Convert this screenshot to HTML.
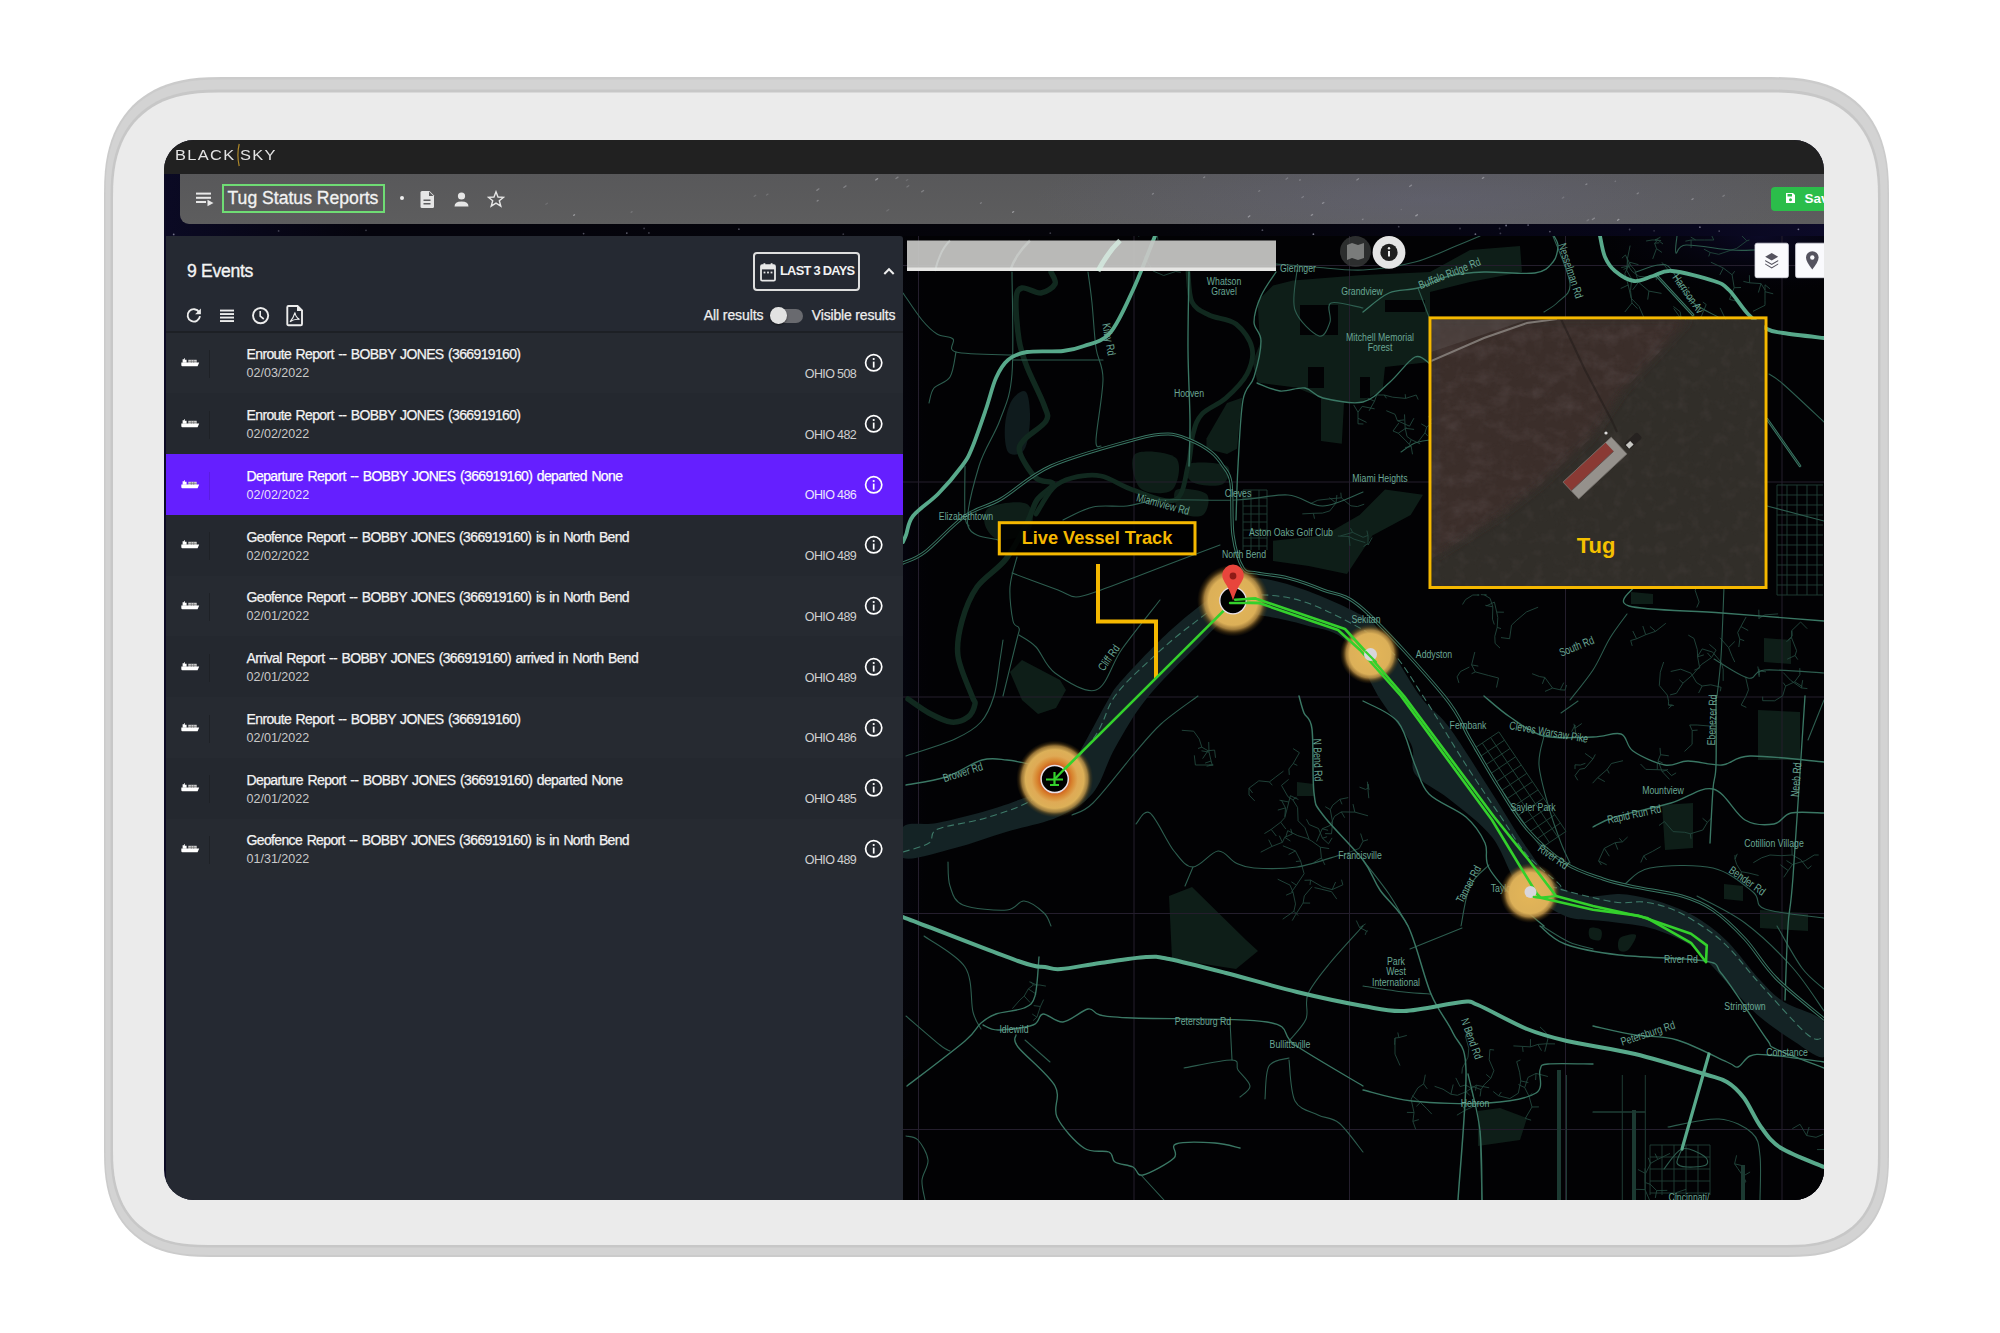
<!DOCTYPE html>
<html><head><meta charset="utf-8">
<style>
*{box-sizing:border-box;margin:0;padding:0}
html,body{width:2000px;height:1333px;overflow:hidden;background:#fff;font-family:"Liberation Sans",sans-serif}
.a{position:absolute}
.t{position:absolute;white-space:nowrap}
#tab-outer{position:absolute;left:104px;top:77px;width:1785px;height:1180px;border-radius:90px;background:#cacaca}
#tab-mid{position:absolute;left:106px;top:80px;width:1781px;height:1175px;border-radius:88px;background:#d9d9d9}
#tab-line{position:absolute;left:110.5px;top:89.5px;width:1770px;height:1158px;border-radius:82px;background:#c6c6c6}
#tab-in{position:absolute;left:113px;top:92.5px;width:1765px;height:1152.5px;border-radius:79px;background:#ebebeb}
#screen{position:absolute;left:164px;top:140px;width:1660px;height:1060px;border-radius:30px;overflow:hidden;background:linear-gradient(90deg,#0b0a24,#05040d 12%,#040409 60%,#07061a 90%,#0c0a28)}
#topbar{position:absolute;left:0;top:0;width:1660px;height:34px;background:#212121}
#toolbar{position:absolute;left:16px;top:34px;width:1644px;height:50px;background:radial-gradient(ellipse 400px 60px at 1250px 25px,rgba(110,110,150,0.25),rgba(0,0,0,0)),linear-gradient(180deg,#58585a,#5d5d5e);border-radius:0 0 0 9px}
#panel{position:absolute;left:2px;top:96px;width:737px;height:964px;background:#252932;border-radius:0 3px 0 0}
#map{position:absolute;left:739px;top:96px;width:921px;height:964px;background:#030306;overflow:hidden}
</style></head>
<body>
<svg class="a" style="left:0;top:0" width="2000" height="1333" viewBox="0 0 2000 1333"><path d="M1771.00 77.00 L1784.32 77.20 L1794.14 77.81 L1802.92 78.82 L1811.02 80.23 L1818.60 82.04 L1825.72 84.24 L1832.44 86.84 L1838.77 89.83 L1844.73 93.20 L1850.33 96.95 L1855.56 101.07 L1860.43 105.57 L1864.93 110.44 L1869.05 115.67 L1872.80 121.27 L1876.17 127.23 L1879.16 133.56 L1881.76 140.28 L1883.96 147.40 L1885.77 154.98 L1887.18 163.08 L1888.19 171.86 L1888.80 181.68 L1889.00 195.00 L1889.00 1155.52 L1888.83 1166.97 L1888.30 1175.42 L1887.44 1182.97 L1886.22 1189.94 L1884.67 1196.45 L1882.77 1202.58 L1880.54 1208.36 L1877.97 1213.80 L1875.07 1218.93 L1871.84 1223.74 L1868.30 1228.24 L1864.43 1232.43 L1860.24 1236.30 L1855.74 1239.84 L1850.93 1243.07 L1845.80 1245.97 L1840.36 1248.54 L1834.58 1250.77 L1828.45 1252.67 L1821.94 1254.22 L1814.97 1255.44 L1807.42 1256.30 L1798.97 1256.83 L1787.52 1257.00 L210.20 1257.00 L198.22 1256.82 L189.37 1256.27 L181.47 1255.36 L174.18 1254.10 L167.36 1252.47 L160.95 1250.48 L154.90 1248.14 L149.20 1245.46 L143.84 1242.42 L138.80 1239.05 L134.09 1235.33 L129.72 1231.28 L125.67 1226.91 L121.95 1222.20 L118.58 1217.16 L115.54 1211.80 L112.86 1206.10 L110.52 1200.05 L108.53 1193.64 L106.90 1186.82 L105.64 1179.53 L104.73 1171.63 L104.18 1162.78 L104.00 1150.80 L104.00 195.00 L104.20 181.68 L104.81 171.86 L105.82 163.08 L107.23 154.98 L109.04 147.40 L111.24 140.28 L113.84 133.56 L116.83 127.23 L120.20 121.27 L123.95 115.67 L128.07 110.44 L132.57 105.57 L137.44 101.07 L142.67 96.95 L148.27 93.20 L154.23 89.83 L160.56 86.84 L167.28 84.24 L174.40 82.04 L181.98 80.23 L190.08 78.82 L198.86 77.81 L208.68 77.20 L222.00 77.00Z" fill="#cbcbcb"/><path d="M1771.50 79.50 L1784.59 79.70 L1794.25 80.29 L1802.88 81.29 L1810.84 82.67 L1818.29 84.45 L1825.29 86.62 L1831.90 89.17 L1838.12 92.11 L1843.99 95.42 L1849.49 99.11 L1854.63 103.17 L1859.41 107.59 L1863.83 112.37 L1867.89 117.51 L1871.58 123.01 L1874.89 128.88 L1877.83 135.10 L1880.38 141.71 L1882.55 148.71 L1884.33 156.16 L1885.71 164.12 L1886.71 172.75 L1887.30 182.41 L1887.50 195.50 L1887.50 1155.24 L1887.33 1166.50 L1886.82 1174.81 L1885.96 1182.23 L1884.77 1189.07 L1883.24 1195.48 L1881.38 1201.50 L1879.18 1207.18 L1876.66 1212.54 L1873.81 1217.58 L1870.64 1222.31 L1867.15 1226.73 L1863.34 1230.84 L1859.23 1234.65 L1854.81 1238.14 L1850.08 1241.31 L1845.04 1244.16 L1839.68 1246.68 L1834.00 1248.88 L1827.98 1250.74 L1821.57 1252.27 L1814.73 1253.46 L1807.31 1254.32 L1799.00 1254.83 L1787.74 1255.00 L209.90 1255.00 L198.12 1254.82 L189.42 1254.28 L181.66 1253.39 L174.49 1252.14 L167.79 1250.54 L161.49 1248.59 L155.54 1246.29 L149.94 1243.65 L144.66 1240.67 L139.71 1237.35 L135.08 1233.70 L130.78 1229.72 L126.80 1225.42 L123.15 1220.79 L119.83 1215.84 L116.85 1210.56 L114.21 1204.96 L111.91 1199.01 L109.96 1192.71 L108.36 1186.01 L107.11 1178.84 L106.22 1171.08 L105.68 1162.38 L105.50 1150.60 L105.50 195.50 L105.70 182.41 L106.29 172.75 L107.29 164.12 L108.67 156.16 L110.45 148.71 L112.62 141.71 L115.17 135.10 L118.11 128.88 L121.42 123.01 L125.11 117.51 L129.17 112.37 L133.59 107.59 L138.37 103.17 L143.51 99.11 L149.01 95.42 L154.88 92.11 L161.10 89.17 L167.71 86.62 L174.71 84.45 L182.16 82.67 L190.12 81.29 L198.75 80.29 L208.41 79.70 L221.50 79.50Z" fill="#d3d3d3"/><path d="M1771.50 89.50 L1783.80 89.69 L1792.88 90.25 L1800.99 91.18 L1808.47 92.48 L1815.46 94.15 L1822.05 96.19 L1828.25 98.59 L1834.10 101.35 L1839.61 104.46 L1844.78 107.93 L1849.61 111.74 L1854.11 115.89 L1858.26 120.39 L1862.07 125.22 L1865.54 130.39 L1868.65 135.90 L1871.41 141.75 L1873.81 147.95 L1875.85 154.54 L1877.52 161.53 L1878.82 169.01 L1879.75 177.12 L1880.31 186.20 L1880.50 198.50 L1880.50 1153.76 L1880.34 1164.34 L1879.86 1172.15 L1879.06 1179.12 L1877.94 1185.55 L1876.50 1191.57 L1874.75 1197.23 L1872.68 1202.57 L1870.31 1207.60 L1867.63 1212.34 L1864.65 1216.78 L1861.37 1220.94 L1857.80 1224.80 L1853.94 1228.37 L1849.78 1231.65 L1845.34 1234.63 L1840.60 1237.31 L1835.57 1239.68 L1830.23 1241.75 L1824.57 1243.50 L1818.55 1244.94 L1812.12 1246.06 L1805.15 1246.86 L1797.34 1247.34 L1786.76 1247.50 L208.60 1247.50 L197.53 1247.33 L189.36 1246.83 L182.06 1245.99 L175.33 1244.82 L169.03 1243.31 L163.11 1241.48 L157.52 1239.32 L152.26 1236.84 L147.30 1234.03 L142.65 1230.92 L138.30 1227.49 L134.25 1223.75 L130.51 1219.70 L127.08 1215.35 L123.97 1210.70 L121.16 1205.74 L118.68 1200.48 L116.52 1194.89 L114.69 1188.97 L113.18 1182.67 L112.01 1175.94 L111.17 1168.64 L110.67 1160.47 L110.50 1149.40 L110.50 198.50 L110.69 186.20 L111.25 177.12 L112.18 169.01 L113.48 161.53 L115.15 154.54 L117.19 147.95 L119.59 141.75 L122.35 135.90 L125.46 130.39 L128.93 125.22 L132.74 120.39 L136.89 115.89 L141.39 111.74 L146.22 107.93 L151.39 104.46 L156.90 101.35 L162.75 98.59 L168.95 96.19 L175.54 94.15 L182.53 92.48 L190.01 91.18 L198.12 90.25 L207.20 89.69 L219.50 89.50Z" fill="#c7c7c7"/><path d="M1772.00 92.50 L1783.96 92.68 L1792.79 93.23 L1800.67 94.13 L1807.95 95.40 L1814.75 97.02 L1821.16 99.01 L1827.19 101.34 L1832.88 104.02 L1838.24 107.05 L1843.26 110.42 L1847.96 114.13 L1852.33 118.17 L1856.37 122.54 L1860.08 127.24 L1863.45 132.26 L1866.48 137.62 L1869.16 143.31 L1871.49 149.34 L1873.48 155.75 L1875.10 162.55 L1876.37 169.83 L1877.27 177.71 L1877.82 186.54 L1878.00 198.50 L1878.00 1153.84 L1877.84 1164.13 L1877.38 1171.72 L1876.60 1178.50 L1875.51 1184.76 L1874.11 1190.61 L1872.41 1196.11 L1870.40 1201.30 L1868.09 1206.20 L1865.49 1210.80 L1862.59 1215.13 L1859.40 1219.17 L1855.93 1222.93 L1852.17 1226.40 L1848.13 1229.59 L1843.80 1232.49 L1839.20 1235.09 L1834.30 1237.40 L1829.11 1239.41 L1823.61 1241.11 L1817.76 1242.51 L1811.50 1243.60 L1804.72 1244.38 L1797.13 1244.84 L1786.84 1245.00 L208.40 1245.00 L197.63 1244.84 L189.69 1244.35 L182.59 1243.53 L176.04 1242.39 L169.92 1240.93 L164.16 1239.14 L158.73 1237.04 L153.61 1234.63 L148.79 1231.90 L144.26 1228.87 L140.03 1225.54 L136.10 1221.90 L132.46 1217.97 L129.13 1213.74 L126.10 1209.21 L123.37 1204.39 L120.96 1199.27 L118.86 1193.84 L117.07 1188.08 L115.61 1181.96 L114.47 1175.41 L113.65 1168.31 L113.16 1160.37 L113.00 1149.60 L113.00 198.50 L113.18 186.54 L113.73 177.71 L114.63 169.83 L115.90 162.55 L117.52 155.75 L119.51 149.34 L121.84 143.31 L124.52 137.62 L127.55 132.26 L130.92 127.24 L134.63 122.54 L138.67 118.17 L143.04 114.13 L147.74 110.42 L152.76 107.05 L158.12 104.02 L163.81 101.34 L169.84 99.01 L176.25 97.02 L183.05 95.40 L190.33 94.13 L198.21 93.23 L207.04 92.68 L219.00 92.50Z" fill="#ebebeb"/></svg>
<div id="screen">
<div id="topbar"></div>
<div id="toolbar"></div>
<div id="panel"></div>
<div id="map"><svg class="a" style="left:0;top:0" width="921" height="964" viewBox="903 236 921 964">
<defs>
<radialGradient id="spaceL" cx="0" cy="0.5" r="1"><stop offset="0" stop-color="#0d0b2e" stop-opacity="0.9"/><stop offset="1" stop-color="#000" stop-opacity="0"/></radialGradient>
<radialGradient id="spaceTR" cx="0.5" cy="0.5" r="0.5"><stop offset="0" stop-color="#0c0a2a" stop-opacity="0.9"/><stop offset="1" stop-color="#000" stop-opacity="0"/></radialGradient>
<radialGradient id="glowY" cx="0.5" cy="0.5" r="0.5"><stop offset="0" stop-color="#e4b658"/><stop offset="0.68" stop-color="#dcb058"/><stop offset="0.8" stop-color="#c89a48" stop-opacity="0.8"/><stop offset="0.9" stop-color="#8a6420" stop-opacity="0.35"/><stop offset="1" stop-color="#5a4010" stop-opacity="0"/></radialGradient>
<radialGradient id="glowO" cx="0.5" cy="0.5" r="0.5"><stop offset="0" stop-color="#c8401a"/><stop offset="0.34" stop-color="#cc581e"/><stop offset="0.46" stop-color="#d8842e"/><stop offset="0.6" stop-color="#dfaa55"/><stop offset="0.76" stop-color="#dcb058"/><stop offset="0.86" stop-color="#c89a48" stop-opacity="0.75"/><stop offset="0.93" stop-color="#8a6420" stop-opacity="0.3"/><stop offset="1" stop-color="#5a4010" stop-opacity="0"/></radialGradient>
<radialGradient id="land" cx="0.3" cy="0.3" r="0.9"><stop offset="0" stop-color="#403533"/><stop offset="1" stop-color="#3a302d"/></radialGradient>
<filter id="noise2" x="0" y="0" width="100%" height="100%"><feTurbulence type="fractalNoise" baseFrequency="0.045 0.07" numOctaves="4" seed="11"/><feColorMatrix type="matrix" values="0 0 0 0 0.11  0 0 0 0 0.08  0 0 0 0 0.08  0 0 0 -2.2 1.2"/></filter>
<filter id="blur1"><feGaussianBlur stdDeviation="6"/></filter>
<filter id="blur2" x="-10%" y="-10%" width="120%" height="120%"><feGaussianBlur stdDeviation="4"/></filter>
<filter id="noise" x="0" y="0" width="100%" height="100%"><feTurbulence type="fractalNoise" baseFrequency="0.09" numOctaves="3" seed="4"/><feColorMatrix type="matrix" values="0 0 0 0 0.13  0 0 0 0 0.10  0 0 0 0 0.10  0 0 0 -1.5 0.8"/></filter>
</defs>
<rect x="903" y="236" width="921" height="964" fill="#020204"/>
<ellipse cx="903" cy="640" rx="40" ry="420" fill="url(#spaceL)"/><ellipse cx="1760" cy="236" rx="200" ry="70" fill="url(#spaceTR)"/>
<path d="M1257.6 300.8 L1273.0 285.5 L1293.0 280.4 L1359.6 275.3 L1430.0 272.0 L1470.0 250.0 L1520.0 246.0 L1522.0 272.0 L1470.0 282.0 L1430.0 292.0 L1430.0 362.0 L1385.0 367.0 L1382.6 390.0 L1359.6 403.0 L1344.0 403.0 L1341.8 443.7 L1321.0 441.0 L1321.0 397.8 L1296.0 387.6 L1257.6 382.5 L1252.5 362.0 L1260.0 344.0Z" fill="#0e1e18"/>
<path d="M1206.5 438.6 L1227.0 403.0 L1242.0 397.8 L1237.0 448.8 L1227.0 454.0 L1206.5 448.8Z" fill="#0e1e18"/>
<path d="M1135.0 454.0 C1141.0 449.0 1169.8 452.0 1176.0 458.0 C1182.2 464.0 1178.0 485.0 1172.0 490.0 C1166.0 495.0 1146.2 494.0 1140.0 488.0 C1133.8 482.0 1129.0 459.0 1135.0 454.0Z" fill="#0e1e18"/>
<path d="M1188.7 464.0 C1194.5 461.3 1221.5 462.6 1227.0 466.0 C1232.5 469.4 1227.8 481.8 1222.0 484.5 C1216.2 487.2 1197.5 485.4 1192.0 482.0 C1186.5 478.6 1182.9 466.7 1188.7 464.0Z" fill="#0e1e18"/>
<path d="M1176.0 490.0 C1180.4 487.0 1202.0 489.8 1206.5 494.0 C1211.0 498.2 1207.4 512.0 1203.0 515.0 C1198.6 518.0 1184.5 516.2 1180.0 512.0 C1175.5 507.8 1171.6 493.0 1176.0 490.0Z" fill="#0e1e18"/>
<path d="M1273.0 540.7 L1324.0 535.6 L1359.6 515.0 L1385.0 489.6 L1423.0 494.8 L1410.7 515.0 L1372.4 535.6 L1347.0 573.9 L1308.6 566.0 L1273.0 561.0Z" fill="#0e1e18"/>
<path d="M1169.0 896.0 L1192.0 887.0 L1246.0 940.0 L1258.0 951.0 L1236.0 969.0 L1172.0 959.0Z" fill="#0e1e18"/>
<path d="M1478.0 1111.0 L1500.0 1108.0 L1527.0 1118.0 L1520.0 1140.0 L1478.0 1146.0Z" fill="#0e1e18"/>
<path d="M1758.0 710.0 L1800.0 712.0 L1800.0 760.0 L1758.0 760.0Z" fill="#0e1e18"/>
<path d="M1662.0 805.0 L1693.0 803.0 L1693.0 848.0 L1665.0 850.0Z" fill="#0e1e18"/>
<path d="M1764.0 638.0 L1791.0 640.0 L1791.0 664.0 L1764.0 662.0Z" fill="#0e1e18"/>
<path d="M1631.0 592.0 L1653.0 594.0 L1653.0 604.0 L1631.0 604.0Z" fill="#0e1e18"/>
<path d="M1297.0 782.0 L1314.0 784.0 L1314.0 796.0 L1297.0 796.0Z" fill="#0e1e18"/>
<path d="M1010.0 672.0 L1022.0 660.0 L1060.0 680.0 L1066.0 690.0 L1056.0 708.0 L1038.0 714.0 L1022.0 700.0Z" fill="#0e1e18"/>
<path d="M990.0 507.0 C997.0 503.5 1020.3 500.2 1027.0 504.0 C1033.7 507.8 1034.5 524.0 1030.0 530.0 C1025.5 536.0 1007.5 540.8 1000.0 540.0 C992.5 539.2 986.7 530.5 985.0 525.0 C983.3 519.5 983.0 510.5 990.0 507.0Z" fill="#0e1e18"/>
<path d="M1416.0 735.0 C1419.7 730.8 1437.3 739.2 1450.0 750.0 C1462.7 760.8 1488.7 791.7 1492.0 800.0 C1495.3 808.3 1480.7 804.2 1470.0 800.0 C1459.3 795.8 1437.0 785.8 1428.0 775.0 C1419.0 764.2 1412.3 739.2 1416.0 735.0Z" fill="#0e1e18"/>
<path d="M1724.0 884.0 L1743.0 886.0 L1743.0 901.0 L1724.0 899.0Z" fill="#0e1e18"/>
<path d="M1760.0 910.0 L1808.0 913.0 L1808.0 931.0 L1760.0 928.0Z" fill="#0e1e18"/>
<path d="M1590.0 928.0 C1591.8 926.7 1599.3 928.0 1601.0 930.0 C1602.7 932.0 1601.8 938.7 1600.0 940.0 C1598.2 941.3 1591.7 940.0 1590.0 938.0 C1588.3 936.0 1588.2 929.3 1590.0 928.0Z" fill="#0e1e18"/>
<path d="M1620.0 938.0 C1622.8 935.5 1634.7 933.0 1636.0 935.0 C1637.3 937.0 1630.8 947.5 1628.0 950.0 C1625.2 952.5 1620.3 952.0 1619.0 950.0 C1617.7 948.0 1617.2 940.5 1620.0 938.0Z" fill="#0e1e18"/>
<rect x="1308" y="367" width="16" height="21" fill="#020204"/>
<rect x="1360" y="377" width="10" height="21" fill="#020204"/>
<rect x="1300" y="305" width="38" height="30" fill="#020204"/>
<rect x="1385" y="300" width="40" height="12" fill="#020204"/>
<path d="M1012.0 400.0 C1015.5 394.5 1023.0 388.7 1026.0 392.0 C1029.0 395.3 1030.3 410.3 1030.0 420.0 C1029.7 429.7 1027.7 444.7 1024.0 450.0 C1020.3 455.3 1011.2 456.2 1008.0 452.0 C1004.8 447.8 1004.3 433.7 1005.0 425.0 C1005.7 416.3 1008.5 405.5 1012.0 400.0Z" fill="#0f1b1d"/>
<line x1="918.5" y1="236" x2="918.5" y2="1200" stroke="#241e2d" stroke-width="1"/>
<line x1="1134" y1="236" x2="1134" y2="1200" stroke="#241e2d" stroke-width="1"/>
<line x1="1349.5" y1="236" x2="1349.5" y2="1200" stroke="#241e2d" stroke-width="1"/>
<line x1="1565.5" y1="236" x2="1565.5" y2="1200" stroke="#241e2d" stroke-width="1"/>
<line x1="1782" y1="236" x2="1782" y2="1200" stroke="#241e2d" stroke-width="1"/>
<line x1="903" y1="265.5" x2="1824" y2="265.5" stroke="#241e2d" stroke-width="1"/>
<line x1="903" y1="482" x2="1824" y2="482" stroke="#241e2d" stroke-width="1"/>
<line x1="903" y1="697" x2="1824" y2="697" stroke="#241e2d" stroke-width="1"/>
<line x1="903" y1="913.5" x2="1824" y2="913.5" stroke="#241e2d" stroke-width="1"/>
<line x1="903" y1="1129.5" x2="1824" y2="1129.5" stroke="#241e2d" stroke-width="1"/>
<path d="M1051.0 272.0 C1051.7 274.0 1056.7 280.5 1055.0 284.0 C1053.3 287.5 1046.5 292.3 1041.0 293.0 C1035.5 293.7 1026.2 286.8 1022.0 288.0 C1017.8 289.2 1016.5 291.3 1016.0 300.0 C1015.5 308.7 1017.2 328.8 1019.0 340.0 C1020.8 351.2 1022.8 356.2 1027.0 367.0 C1031.2 377.8 1040.8 396.0 1044.0 405.0 C1047.2 414.0 1049.3 415.2 1046.0 421.0 C1042.7 426.8 1028.3 434.7 1024.0 440.0 C1019.7 445.3 1018.0 446.7 1020.0 453.0 C1022.0 459.3 1030.5 472.8 1036.0 478.0 C1041.5 483.2 1052.8 480.3 1053.0 484.0 C1053.2 487.7 1041.3 493.5 1037.0 500.0 C1032.7 506.5 1032.2 513.2 1027.0 523.0 C1021.8 532.8 1014.3 548.3 1006.0 559.0 C997.7 569.7 984.3 576.7 977.0 587.0 C969.7 597.3 965.2 609.5 962.0 621.0 C958.8 632.5 956.3 643.5 958.0 656.0 C959.7 668.5 969.2 688.0 972.0 696.0 C974.8 704.0 975.7 700.5 975.0 704.0 C974.3 707.5 972.0 714.0 968.0 717.0 C964.0 720.0 957.5 722.7 951.0 722.0 C944.5 721.3 936.2 716.8 929.0 713.0 C921.8 709.2 911.5 701.3 908.0 699.0" fill="none" stroke="#11291f" stroke-width="5.5" stroke-linecap="round"/>
<path d="M1188.0 272.0 C1188.7 277.0 1188.5 294.8 1192.0 302.0 C1195.5 309.2 1201.7 311.3 1209.0 315.0 C1216.3 318.7 1228.8 318.5 1236.0 324.0 C1243.2 329.5 1250.2 339.7 1252.0 348.0 C1253.8 356.3 1251.3 365.7 1247.0 374.0 C1242.7 382.3 1233.5 391.3 1226.0 398.0 C1218.5 404.7 1207.5 408.0 1202.0 414.0 C1196.5 420.0 1195.3 425.3 1193.0 434.0 C1190.7 442.7 1191.0 455.0 1188.0 466.0 C1185.0 477.0 1184.2 496.0 1175.0 500.0 C1165.8 504.0 1145.3 494.0 1133.0 490.0 C1120.7 486.0 1111.2 478.0 1101.0 476.0 C1090.8 474.0 1080.0 476.0 1072.0 478.0 C1064.0 480.0 1059.0 482.0 1053.0 488.0 C1047.0 494.0 1038.8 509.7 1036.0 514.0" fill="none" stroke="#11291f" stroke-width="4.8" stroke-linecap="round"/>
<path d="M903.0 827.0 C908.7 821.2 922.7 825.8 937.0 823.0 C951.3 820.2 974.5 814.2 989.0 810.0 C1003.5 805.8 1012.5 802.0 1024.0 798.0 C1035.5 794.0 1048.0 795.0 1058.0 786.0 C1068.0 777.0 1075.7 758.3 1084.0 744.0 C1092.3 729.7 1101.5 710.8 1108.0 700.0 C1114.5 689.2 1112.3 690.8 1123.0 679.0 C1133.7 667.2 1155.5 643.8 1172.0 629.0 C1188.5 614.2 1208.3 598.5 1222.0 590.0 C1235.7 581.5 1240.2 578.0 1254.0 578.0 C1267.8 578.0 1286.8 583.7 1305.0 590.0 C1323.2 596.3 1350.5 609.0 1363.0 616.0 C1375.5 623.0 1370.5 618.7 1380.0 632.0 C1389.5 645.3 1408.5 680.2 1420.0 696.0 C1431.5 711.8 1437.0 710.8 1449.0 727.0 C1461.0 743.2 1479.0 772.8 1492.0 793.0 C1505.0 813.2 1516.3 832.8 1527.0 848.0 C1537.7 863.2 1546.0 876.0 1556.0 884.0 C1566.0 892.0 1576.5 894.3 1587.0 896.0 C1597.5 897.7 1608.5 893.5 1619.0 894.0 C1629.5 894.5 1639.5 896.3 1650.0 899.0 C1660.5 901.7 1672.8 906.0 1682.0 910.0 C1691.2 914.0 1697.2 917.5 1705.0 923.0 C1712.8 928.5 1719.8 933.5 1729.0 943.0 C1738.2 952.5 1750.8 970.2 1760.0 980.0 C1769.2 989.8 1773.3 995.0 1784.0 1002.0 C1794.7 1009.0 1817.3 1012.8 1824.0 1022.0 C1830.7 1031.2 1829.3 1054.0 1824.0 1057.0 C1818.7 1060.0 1802.7 1046.7 1792.0 1040.0 C1781.3 1033.3 1769.2 1024.7 1760.0 1017.0 C1750.8 1009.3 1744.8 1002.3 1737.0 994.0 C1729.2 985.7 1720.8 975.2 1713.0 967.0 C1705.2 958.8 1700.5 951.5 1690.0 945.0 C1679.5 938.5 1664.5 932.0 1650.0 928.0 C1635.5 924.0 1616.2 922.7 1603.0 921.0 C1589.8 919.3 1580.7 920.7 1571.0 918.0 C1561.3 915.3 1553.8 910.3 1545.0 905.0 C1536.2 899.7 1526.8 897.3 1518.0 886.0 C1509.2 874.7 1503.5 851.5 1492.0 837.0 C1480.5 822.5 1461.8 809.5 1449.0 799.0 C1436.2 788.5 1421.3 783.2 1415.0 774.0 C1408.7 764.8 1416.8 756.5 1411.0 744.0 C1405.2 731.5 1390.8 716.2 1380.0 699.0 C1369.2 681.8 1358.5 653.3 1346.0 641.0 C1333.5 628.7 1318.7 629.2 1305.0 625.0 C1291.3 620.8 1276.0 617.8 1264.0 616.0 C1252.0 614.2 1244.2 609.0 1233.0 614.0 C1221.8 619.0 1211.3 632.0 1197.0 646.0 C1182.7 660.0 1160.7 681.0 1147.0 698.0 C1133.3 715.0 1124.0 732.2 1115.0 748.0 C1106.0 763.8 1102.5 781.5 1093.0 793.0 C1083.5 804.5 1072.5 810.5 1058.0 817.0 C1043.5 823.5 1023.2 826.8 1006.0 832.0 C988.8 837.2 972.2 843.7 955.0 848.0 C937.8 852.3 911.7 861.5 903.0 858.0 C894.3 854.5 897.3 832.8 903.0 827.0Z" fill="#142325"/>
<path d="M903.0 852.0 C907.3 850.5 923.2 846.8 929.0 843.0 C934.8 839.2 928.0 833.3 938.0 829.0 C948.0 824.7 971.8 822.8 989.0 817.0 C1006.2 811.2 1023.7 807.0 1041.0 794.0 C1058.3 781.0 1080.7 755.3 1093.0 739.0 C1105.3 722.7 1105.5 709.2 1115.0 696.0 C1124.5 682.8 1137.5 671.7 1150.0 660.0 C1162.5 648.3 1176.0 636.3 1190.0 626.0 C1204.0 615.7 1217.3 602.7 1234.0 598.0 C1250.7 593.3 1271.5 594.3 1290.0 598.0 C1308.5 601.7 1328.3 611.3 1345.0 620.0 C1361.7 628.7 1377.0 637.3 1390.0 650.0 C1403.0 662.7 1410.3 676.8 1423.0 696.0 C1435.7 715.2 1453.0 744.8 1466.0 765.0 C1479.0 785.2 1490.8 802.0 1501.0 817.0 C1511.2 832.0 1517.2 843.7 1527.0 855.0 C1536.8 866.3 1555.2 879.5 1560.0 885.0 C1564.8 890.5 1547.0 885.2 1556.0 888.0 C1565.0 890.8 1599.3 899.7 1614.0 902.0 C1628.7 904.3 1634.0 900.7 1644.0 902.0 C1654.0 903.3 1663.8 905.7 1674.0 910.0 C1684.2 914.3 1695.8 921.7 1705.0 928.0 C1714.2 934.3 1719.8 938.7 1729.0 948.0 C1738.2 957.3 1746.8 969.5 1760.0 984.0 C1773.2 998.5 1797.3 1026.2 1808.0 1035.0 C1818.7 1043.8 1821.3 1036.7 1824.0 1037.0" fill="none" stroke="#3e7a69" stroke-width="1.1" stroke-dasharray="7 4"/>
<g transform="translate(1520 790) rotate(-34)"><line x1="-15.0" y1="-60.0" x2="-15.0" y2="60.0" stroke="#1f4036" stroke-width="0.9"/><line x1="-5.0" y1="-60.0" x2="-5.0" y2="60.0" stroke="#1f4036" stroke-width="0.9"/><line x1="5.0" y1="-60.0" x2="5.0" y2="60.0" stroke="#1f4036" stroke-width="0.9"/><line x1="15.0" y1="-60.0" x2="15.0" y2="60.0" stroke="#1f4036" stroke-width="0.9"/><line x1="-15.0" y1="-60.0" x2="15.0" y2="-60.0" stroke="#1f4036" stroke-width="0.9"/><line x1="-15.0" y1="-50.0" x2="15.0" y2="-50.0" stroke="#1f4036" stroke-width="0.9"/><line x1="-15.0" y1="-40.0" x2="15.0" y2="-40.0" stroke="#1f4036" stroke-width="0.9"/><line x1="-15.0" y1="-30.0" x2="15.0" y2="-30.0" stroke="#1f4036" stroke-width="0.9"/><line x1="-15.0" y1="-20.0" x2="15.0" y2="-20.0" stroke="#1f4036" stroke-width="0.9"/><line x1="-15.0" y1="-10.0" x2="15.0" y2="-10.0" stroke="#1f4036" stroke-width="0.9"/><line x1="-15.0" y1="0.0" x2="15.0" y2="0.0" stroke="#1f4036" stroke-width="0.9"/><line x1="-15.0" y1="10.0" x2="15.0" y2="10.0" stroke="#1f4036" stroke-width="0.9"/><line x1="-15.0" y1="20.0" x2="15.0" y2="20.0" stroke="#1f4036" stroke-width="0.9"/><line x1="-15.0" y1="30.0" x2="15.0" y2="30.0" stroke="#1f4036" stroke-width="0.9"/><line x1="-15.0" y1="40.0" x2="15.0" y2="40.0" stroke="#1f4036" stroke-width="0.9"/><line x1="-15.0" y1="50.0" x2="15.0" y2="50.0" stroke="#1f4036" stroke-width="0.9"/><line x1="-15.0" y1="60.0" x2="15.0" y2="60.0" stroke="#1f4036" stroke-width="0.9"/></g>
<g transform="translate(1800 540) rotate(0)"><line x1="-23.0" y1="-55.0" x2="-23.0" y2="55.0" stroke="#1f4036" stroke-width="0.9"/><line x1="-13.0" y1="-55.0" x2="-13.0" y2="55.0" stroke="#1f4036" stroke-width="0.9"/><line x1="-3.0" y1="-55.0" x2="-3.0" y2="55.0" stroke="#1f4036" stroke-width="0.9"/><line x1="7.0" y1="-55.0" x2="7.0" y2="55.0" stroke="#1f4036" stroke-width="0.9"/><line x1="17.0" y1="-55.0" x2="17.0" y2="55.0" stroke="#1f4036" stroke-width="0.9"/><line x1="-23.0" y1="-55.0" x2="23.0" y2="-55.0" stroke="#1f4036" stroke-width="0.9"/><line x1="-23.0" y1="-45.0" x2="23.0" y2="-45.0" stroke="#1f4036" stroke-width="0.9"/><line x1="-23.0" y1="-35.0" x2="23.0" y2="-35.0" stroke="#1f4036" stroke-width="0.9"/><line x1="-23.0" y1="-25.0" x2="23.0" y2="-25.0" stroke="#1f4036" stroke-width="0.9"/><line x1="-23.0" y1="-15.0" x2="23.0" y2="-15.0" stroke="#1f4036" stroke-width="0.9"/><line x1="-23.0" y1="-5.0" x2="23.0" y2="-5.0" stroke="#1f4036" stroke-width="0.9"/><line x1="-23.0" y1="5.0" x2="23.0" y2="5.0" stroke="#1f4036" stroke-width="0.9"/><line x1="-23.0" y1="15.0" x2="23.0" y2="15.0" stroke="#1f4036" stroke-width="0.9"/><line x1="-23.0" y1="25.0" x2="23.0" y2="25.0" stroke="#1f4036" stroke-width="0.9"/><line x1="-23.0" y1="35.0" x2="23.0" y2="35.0" stroke="#1f4036" stroke-width="0.9"/><line x1="-23.0" y1="45.0" x2="23.0" y2="45.0" stroke="#1f4036" stroke-width="0.9"/><line x1="-23.0" y1="55.0" x2="23.0" y2="55.0" stroke="#1f4036" stroke-width="0.9"/></g>
<g transform="translate(1088 380) rotate(0)"><line x1="-0.1" y1="-0.05" x2="-0.1" y2="0.05" stroke="#1f4036" stroke-width="0.9"/><line x1="-0.05" y1="-0.1" x2="0.05" y2="-0.1" stroke="#1f4036" stroke-width="0.9"/></g>
<g transform="translate(1255 520) rotate(0)"><line x1="-12.0" y1="-30.0" x2="-12.0" y2="30.0" stroke="#1f4036" stroke-width="0.9"/><line x1="-4.0" y1="-30.0" x2="-4.0" y2="30.0" stroke="#1f4036" stroke-width="0.9"/><line x1="4.0" y1="-30.0" x2="4.0" y2="30.0" stroke="#1f4036" stroke-width="0.9"/><line x1="12.0" y1="-30.0" x2="12.0" y2="30.0" stroke="#1f4036" stroke-width="0.9"/><line x1="-12.0" y1="-30.0" x2="12.0" y2="-30.0" stroke="#1f4036" stroke-width="0.9"/><line x1="-12.0" y1="-22.0" x2="12.0" y2="-22.0" stroke="#1f4036" stroke-width="0.9"/><line x1="-12.0" y1="-14.0" x2="12.0" y2="-14.0" stroke="#1f4036" stroke-width="0.9"/><line x1="-12.0" y1="-6.0" x2="12.0" y2="-6.0" stroke="#1f4036" stroke-width="0.9"/><line x1="-12.0" y1="2.0" x2="12.0" y2="2.0" stroke="#1f4036" stroke-width="0.9"/><line x1="-12.0" y1="10.0" x2="12.0" y2="10.0" stroke="#1f4036" stroke-width="0.9"/><line x1="-12.0" y1="18.0" x2="12.0" y2="18.0" stroke="#1f4036" stroke-width="0.9"/><line x1="-12.0" y1="26.0" x2="12.0" y2="26.0" stroke="#1f4036" stroke-width="0.9"/></g>
<g transform="translate(1088 1010) rotate(0)"><line x1="-0.1" y1="-0.05" x2="-0.1" y2="0.05" stroke="#1f4036" stroke-width="0.9"/><line x1="-0.05" y1="-0.1" x2="0.05" y2="-0.1" stroke="#1f4036" stroke-width="0.9"/></g>
<g transform="translate(1680 1170) rotate(0)"><line x1="-30.0" y1="-25.0" x2="-30.0" y2="25.0" stroke="#1f4036" stroke-width="0.9"/><line x1="-18.0" y1="-25.0" x2="-18.0" y2="25.0" stroke="#1f4036" stroke-width="0.9"/><line x1="-6.0" y1="-25.0" x2="-6.0" y2="25.0" stroke="#1f4036" stroke-width="0.9"/><line x1="6.0" y1="-25.0" x2="6.0" y2="25.0" stroke="#1f4036" stroke-width="0.9"/><line x1="18.0" y1="-25.0" x2="18.0" y2="25.0" stroke="#1f4036" stroke-width="0.9"/><line x1="30.0" y1="-25.0" x2="30.0" y2="25.0" stroke="#1f4036" stroke-width="0.9"/><line x1="-30.0" y1="-25.0" x2="30.0" y2="-25.0" stroke="#1f4036" stroke-width="0.9"/><line x1="-30.0" y1="-13.0" x2="30.0" y2="-13.0" stroke="#1f4036" stroke-width="0.9"/><line x1="-30.0" y1="-1.0" x2="30.0" y2="-1.0" stroke="#1f4036" stroke-width="0.9"/><line x1="-30.0" y1="11.0" x2="30.0" y2="11.0" stroke="#1f4036" stroke-width="0.9"/><line x1="-30.0" y1="23.0" x2="30.0" y2="23.0" stroke="#1f4036" stroke-width="0.9"/></g>
<line x1="1293.2" y1="763.5" x2="1297.3" y2="765.4" stroke="#23473d" stroke-width="0.9"/>
<line x1="1299.4" y1="752.7" x2="1293.1" y2="748.6" stroke="#23473d" stroke-width="0.9"/>
<path d="M1289.3 774.9 L1288.9 769.0 L1293.2 763.5 L1299.4 752.7" fill="none" stroke="#23473d" stroke-width="0.9" stroke-linejoin="round"/>
<line x1="1272.0" y1="846.4" x2="1268.7" y2="839.7" stroke="#23473d" stroke-width="0.9"/>
<line x1="1282.4" y1="842.3" x2="1279.3" y2="835.7" stroke="#23473d" stroke-width="0.9"/>
<line x1="1284.7" y1="837.3" x2="1290.4" y2="841.0" stroke="#23473d" stroke-width="0.9"/>
<line x1="1292.3" y1="834.0" x2="1290.7" y2="828.8" stroke="#23473d" stroke-width="0.9"/>
<path d="M1260.7 852.2 L1272.0 846.4 L1282.4 842.3 L1284.7 837.3 L1292.3 834.0" fill="none" stroke="#23473d" stroke-width="0.9" stroke-linejoin="round"/>
<line x1="1322.2" y1="828.8" x2="1328.1" y2="830.3" stroke="#23473d" stroke-width="0.9"/>
<line x1="1341.3" y1="811.9" x2="1344.7" y2="817.7" stroke="#23473d" stroke-width="0.9"/>
<line x1="1354.8" y1="812.1" x2="1353.0" y2="804.1" stroke="#23473d" stroke-width="0.9"/>
<path d="M1316.6 841.5 L1322.2 828.8 L1330.3 825.4 L1334.5 816.3 L1341.3 811.9 L1354.8 812.1 L1368.0 815.8" fill="none" stroke="#23473d" stroke-width="0.9" stroke-linejoin="round"/>
<line x1="1288.8" y1="802.0" x2="1279.5" y2="800.2" stroke="#23473d" stroke-width="0.9"/>
<line x1="1290.4" y1="795.7" x2="1298.4" y2="799.5" stroke="#23473d" stroke-width="0.9"/>
<path d="M1285.0 816.7 L1287.1 808.7 L1288.8 802.0 L1290.4 795.7" fill="none" stroke="#23473d" stroke-width="0.9" stroke-linejoin="round"/>
<line x1="1339.9" y1="799.3" x2="1342.0" y2="804.3" stroke="#23473d" stroke-width="0.9"/>
<line x1="1330.3" y1="809.7" x2="1325.3" y2="806.7" stroke="#23473d" stroke-width="0.9"/>
<line x1="1331.5" y1="833.8" x2="1325.1" y2="833.6" stroke="#23473d" stroke-width="0.9"/>
<path d="M1348.2 797.6 L1339.9 799.3 L1332.7 805.2 L1330.3 809.7 L1332.6 822.2 L1331.5 833.8" fill="none" stroke="#23473d" stroke-width="0.9" stroke-linejoin="round"/>
<line x1="1322.5" y1="838.3" x2="1327.1" y2="836.7" stroke="#23473d" stroke-width="0.9"/>
<line x1="1328.5" y1="843.8" x2="1332.1" y2="837.9" stroke="#23473d" stroke-width="0.9"/>
<path d="M1306.5 819.3 L1309.2 824.6 L1318.5 828.5 L1322.5 838.3 L1328.5 843.8" fill="none" stroke="#23473d" stroke-width="0.9" stroke-linejoin="round"/>
<line x1="1363.0" y1="841.2" x2="1368.0" y2="839.7" stroke="#23473d" stroke-width="0.9"/>
<line x1="1348.1" y1="852.7" x2="1349.6" y2="858.1" stroke="#23473d" stroke-width="0.9"/>
<path d="M1360.6 833.5 L1363.0 841.2 L1359.2 848.5 L1348.1 852.7 L1342.8 856.4" fill="none" stroke="#23473d" stroke-width="0.9" stroke-linejoin="round"/>
<line x1="1303.1" y1="903.0" x2="1310.1" y2="903.1" stroke="#23473d" stroke-width="0.9"/>
<path d="M1312.1 886.7 L1304.3 895.9 L1303.1 903.0 L1295.6 914.7 L1292.2 920.6" fill="none" stroke="#23473d" stroke-width="0.9" stroke-linejoin="round"/>
<line x1="1296.4" y1="885.2" x2="1291.4" y2="881.8" stroke="#23473d" stroke-width="0.9"/>
<line x1="1300.6" y1="861.0" x2="1295.9" y2="861.5" stroke="#23473d" stroke-width="0.9"/>
<line x1="1295.4" y1="850.9" x2="1288.6" y2="854.6" stroke="#23473d" stroke-width="0.9"/>
<path d="M1291.5 891.9 L1296.4 885.2 L1304.1 873.7 L1300.6 861.0 L1295.4 850.9 L1282.9 845.8" fill="none" stroke="#23473d" stroke-width="0.9" stroke-linejoin="round"/>
<line x1="1310.6" y1="880.1" x2="1310.0" y2="884.9" stroke="#23473d" stroke-width="0.9"/>
<line x1="1332.2" y1="889.6" x2="1335.6" y2="882.0" stroke="#23473d" stroke-width="0.9"/>
<line x1="1342.8" y1="884.8" x2="1341.5" y2="879.7" stroke="#23473d" stroke-width="0.9"/>
<path d="M1304.5 880.3 L1310.6 880.1 L1322.6 887.0 L1332.2 889.6 L1342.8 884.8" fill="none" stroke="#23473d" stroke-width="0.9" stroke-linejoin="round"/>
<line x1="1285.5" y1="807.9" x2="1277.8" y2="810.1" stroke="#23473d" stroke-width="0.9"/>
<line x1="1280.7" y1="822.2" x2="1285.9" y2="829.1" stroke="#23473d" stroke-width="0.9"/>
<line x1="1271.2" y1="829.4" x2="1276.3" y2="836.0" stroke="#23473d" stroke-width="0.9"/>
<path d="M1281.4 800.1 L1285.5 807.9 L1284.8 817.6 L1280.7 822.2 L1271.2 829.4 L1264.4 833.6" fill="none" stroke="#23473d" stroke-width="0.9" stroke-linejoin="round"/>
<path d="M1314.5 887.6 L1321.8 889.3 L1331.6 891.7 L1336.8 899.1" fill="none" stroke="#23473d" stroke-width="0.9" stroke-linejoin="round"/>
<line x1="1292.8" y1="799.8" x2="1296.5" y2="797.3" stroke="#23473d" stroke-width="0.9"/>
<line x1="1281.5" y1="785.4" x2="1288.6" y2="779.4" stroke="#23473d" stroke-width="0.9"/>
<path d="M1309.1 839.2 L1304.9 827.6 L1298.1 820.8 L1297.6 807.5 L1292.8 799.8 L1288.0 796.8 L1281.5 785.4" fill="none" stroke="#23473d" stroke-width="0.9" stroke-linejoin="round"/>
<line x1="1368.0" y1="785.8" x2="1367.3" y2="781.7" stroke="#23473d" stroke-width="0.9"/>
<line x1="1368.0" y1="784.2" x2="1369.0" y2="789.9" stroke="#23473d" stroke-width="0.9"/>
<line x1="1368.0" y1="789.6" x2="1368.8" y2="798.2" stroke="#23473d" stroke-width="0.9"/>
<path d="M1359.5 787.1 L1365.5 789.4 L1368.0 788.2 L1368.0 785.8 L1368.0 784.2 L1368.0 787.7 L1368.0 789.6" fill="none" stroke="#23473d" stroke-width="0.9" stroke-linejoin="round"/>
<line x1="1269.4" y1="781.9" x2="1272.3" y2="785.3" stroke="#23473d" stroke-width="0.9"/>
<line x1="1249.0" y1="788.2" x2="1252.6" y2="793.0" stroke="#23473d" stroke-width="0.9"/>
<line x1="1249.0" y1="795.0" x2="1254.7" y2="800.9" stroke="#23473d" stroke-width="0.9"/>
<path d="M1283.5 771.1 L1275.7 777.0 L1269.4 781.9 L1258.8 780.8 L1249.0 788.2 L1249.0 795.0" fill="none" stroke="#23473d" stroke-width="0.9" stroke-linejoin="round"/>
<line x1="1359.6" y1="927.6" x2="1365.6" y2="923.9" stroke="#23473d" stroke-width="0.9"/>
<line x1="1366.5" y1="931.0" x2="1365.2" y2="934.9" stroke="#23473d" stroke-width="0.9"/>
<path d="M1356.3 920.5 L1359.6 927.6 L1366.5 931.0 L1368.0 931.0 L1368.0 931.0" fill="none" stroke="#23473d" stroke-width="0.9" stroke-linejoin="round"/>
<line x1="1321.4" y1="857.9" x2="1313.7" y2="862.6" stroke="#23473d" stroke-width="0.9"/>
<line x1="1320.3" y1="847.2" x2="1329.2" y2="848.6" stroke="#23473d" stroke-width="0.9"/>
<line x1="1287.7" y1="830.6" x2="1285.8" y2="837.0" stroke="#23473d" stroke-width="0.9"/>
<path d="M1324.9 864.9 L1321.4 857.9 L1320.3 847.2 L1311.7 841.0 L1306.9 838.4 L1297.7 835.6 L1287.7 830.6" fill="none" stroke="#23473d" stroke-width="0.9" stroke-linejoin="round"/>
<line x1="1293.9" y1="911.3" x2="1298.1" y2="915.5" stroke="#23473d" stroke-width="0.9"/>
<line x1="1293.0" y1="892.2" x2="1286.1" y2="895.2" stroke="#23473d" stroke-width="0.9"/>
<path d="M1282.7 919.2 L1293.9 911.3 L1295.5 903.9 L1293.0 892.2 L1290.0 885.1 L1277.7 879.2" fill="none" stroke="#23473d" stroke-width="0.9" stroke-linejoin="round"/>
<line x1="1632.0" y1="303.0" x2="1637.5" y2="308.6" stroke="#23473d" stroke-width="0.9"/>
<path d="M1624.8 312.0 L1632.0 303.0 L1630.5 290.6 L1631.7 279.0 L1626.8 270.6 L1627.5 258.4 L1630.1 245.6" fill="none" stroke="#23473d" stroke-width="0.9" stroke-linejoin="round"/>
<line x1="1723.3" y1="268.0" x2="1719.8" y2="274.9" stroke="#23473d" stroke-width="0.9"/>
<line x1="1732.1" y1="274.8" x2="1734.7" y2="271.2" stroke="#23473d" stroke-width="0.9"/>
<line x1="1734.2" y1="287.7" x2="1741.0" y2="287.5" stroke="#23473d" stroke-width="0.9"/>
<line x1="1729.5" y1="299.4" x2="1737.2" y2="301.3" stroke="#23473d" stroke-width="0.9"/>
<path d="M1710.9 262.2 L1723.3 268.0 L1732.1 274.8 L1734.2 287.7 L1729.5 299.4" fill="none" stroke="#23473d" stroke-width="0.9" stroke-linejoin="round"/>
<line x1="1686.0" y1="318.3" x2="1684.7" y2="322.9" stroke="#23473d" stroke-width="0.9"/>
<line x1="1701.3" y1="316.5" x2="1704.7" y2="322.4" stroke="#23473d" stroke-width="0.9"/>
<line x1="1706.2" y1="304.5" x2="1702.8" y2="302.1" stroke="#23473d" stroke-width="0.9"/>
<path d="M1673.7 308.4 L1679.8 317.0 L1686.0 318.3 L1695.2 320.0 L1701.3 316.5 L1706.2 304.5" fill="none" stroke="#23473d" stroke-width="0.9" stroke-linejoin="round"/>
<line x1="1681.0" y1="317.3" x2="1676.2" y2="316.9" stroke="#23473d" stroke-width="0.9"/>
<line x1="1668.9" y1="325.0" x2="1664.6" y2="320.3" stroke="#23473d" stroke-width="0.9"/>
<line x1="1661.0" y1="325.0" x2="1662.1" y2="328.9" stroke="#23473d" stroke-width="0.9"/>
<path d="M1673.4 306.5 L1680.1 311.7 L1681.0 317.3 L1677.3 325.0 L1672.4 325.0 L1668.9 325.0 L1661.0 325.0" fill="none" stroke="#23473d" stroke-width="0.9" stroke-linejoin="round"/>
<line x1="1725.8" y1="319.8" x2="1720.8" y2="323.7" stroke="#23473d" stroke-width="0.9"/>
<line x1="1717.0" y1="325.0" x2="1720.9" y2="329.2" stroke="#23473d" stroke-width="0.9"/>
<line x1="1709.8" y1="325.0" x2="1707.8" y2="319.1" stroke="#23473d" stroke-width="0.9"/>
<path d="M1720.1 307.9 L1725.8 319.8 L1724.6 325.0 L1717.0 325.0 L1709.8 325.0" fill="none" stroke="#23473d" stroke-width="0.9" stroke-linejoin="round"/>
<line x1="1765.0" y1="291.7" x2="1773.2" y2="293.8" stroke="#23473d" stroke-width="0.9"/>
<line x1="1765.0" y1="284.8" x2="1769.9" y2="288.8" stroke="#23473d" stroke-width="0.9"/>
<path d="M1753.0 311.3 L1765.0 305.3 L1765.0 304.9 L1765.0 303.0 L1765.0 300.2 L1765.0 291.7 L1765.0 284.8" fill="none" stroke="#23473d" stroke-width="0.9" stroke-linejoin="round"/>
<line x1="1628.4" y1="266.1" x2="1621.2" y2="267.6" stroke="#23473d" stroke-width="0.9"/>
<line x1="1655.7" y1="275.8" x2="1656.5" y2="280.1" stroke="#23473d" stroke-width="0.9"/>
<line x1="1667.9" y1="269.5" x2="1661.9" y2="262.3" stroke="#23473d" stroke-width="0.9"/>
<path d="M1626.8 257.1 L1628.4 266.1 L1632.2 271.4 L1638.9 276.3 L1644.1 276.9 L1655.7 275.8 L1667.9 269.5" fill="none" stroke="#23473d" stroke-width="0.9" stroke-linejoin="round"/>
<line x1="1648.9" y1="291.1" x2="1647.7" y2="299.6" stroke="#23473d" stroke-width="0.9"/>
<line x1="1638.5" y1="282.2" x2="1632.7" y2="289.8" stroke="#23473d" stroke-width="0.9"/>
<line x1="1630.9" y1="265.6" x2="1623.5" y2="269.5" stroke="#23473d" stroke-width="0.9"/>
<line x1="1625.4" y1="255.0" x2="1621.9" y2="258.2" stroke="#23473d" stroke-width="0.9"/>
<path d="M1661.5 293.4 L1648.9 291.1 L1638.5 282.2 L1634.8 270.0 L1630.9 265.6 L1625.4 255.0" fill="none" stroke="#23473d" stroke-width="0.9" stroke-linejoin="round"/>
<line x1="1691.1" y1="240.0" x2="1685.4" y2="241.2" stroke="#23473d" stroke-width="0.9"/>
<line x1="1695.8" y1="240.0" x2="1690.8" y2="237.1" stroke="#23473d" stroke-width="0.9"/>
<line x1="1713.8" y1="240.0" x2="1711.0" y2="234.1" stroke="#23473d" stroke-width="0.9"/>
<path d="M1691.1 247.8 L1691.1 240.0 L1695.8 240.0 L1704.7 240.0 L1713.8 240.0" fill="none" stroke="#23473d" stroke-width="0.9" stroke-linejoin="round"/>
<line x1="1710.2" y1="252.5" x2="1708.7" y2="256.4" stroke="#23473d" stroke-width="0.9"/>
<line x1="1746.8" y1="240.9" x2="1740.3" y2="234.2" stroke="#23473d" stroke-width="0.9"/>
<path d="M1703.9 249.1 L1710.2 252.5 L1718.8 254.3 L1730.3 250.4 L1736.8 248.3 L1746.8 240.9 L1749.4 240.0" fill="none" stroke="#23473d" stroke-width="0.9" stroke-linejoin="round"/>
<line x1="1749.6" y1="282.8" x2="1749.4" y2="275.2" stroke="#23473d" stroke-width="0.9"/>
<line x1="1761.0" y1="283.6" x2="1758.4" y2="292.5" stroke="#23473d" stroke-width="0.9"/>
<path d="M1743.4 281.4 L1749.6 282.8 L1761.0 283.6 L1765.0 290.0" fill="none" stroke="#23473d" stroke-width="0.9" stroke-linejoin="round"/>
<line x1="1656.5" y1="248.6" x2="1661.9" y2="252.4" stroke="#23473d" stroke-width="0.9"/>
<line x1="1654.6" y1="243.2" x2="1659.3" y2="242.8" stroke="#23473d" stroke-width="0.9"/>
<line x1="1657.8" y1="240.0" x2="1663.0" y2="244.0" stroke="#23473d" stroke-width="0.9"/>
<line x1="1655.0" y1="240.0" x2="1660.5" y2="237.2" stroke="#23473d" stroke-width="0.9"/>
<line x1="1656.9" y1="240.0" x2="1661.1" y2="240.6" stroke="#23473d" stroke-width="0.9"/>
<line x1="1652.0" y1="240.0" x2="1646.1" y2="241.0" stroke="#23473d" stroke-width="0.9"/>
<path d="M1652.7 258.9 L1656.5 248.6 L1654.6 243.2 L1657.8 240.0 L1655.0 240.0 L1656.9 240.0 L1652.0 240.0" fill="none" stroke="#23473d" stroke-width="0.9" stroke-linejoin="round"/>
<line x1="1628.2" y1="285.0" x2="1620.7" y2="288.5" stroke="#23473d" stroke-width="0.9"/>
<line x1="1630.0" y1="262.3" x2="1638.5" y2="264.7" stroke="#23473d" stroke-width="0.9"/>
<path d="M1643.6 316.8 L1639.1 306.5 L1631.2 298.2 L1628.2 285.0 L1624.8 273.5 L1630.0 262.3" fill="none" stroke="#23473d" stroke-width="0.9" stroke-linejoin="round"/>
<line x1="1411.2" y1="446.5" x2="1405.0" y2="447.5" stroke="#23473d" stroke-width="0.9"/>
<line x1="1398.3" y1="433.2" x2="1406.6" y2="427.7" stroke="#23473d" stroke-width="0.9"/>
<line x1="1393.0" y1="431.0" x2="1398.8" y2="423.1" stroke="#23473d" stroke-width="0.9"/>
<path d="M1412.5 454.3 L1411.2 446.5 L1405.3 440.2 L1398.3 433.2 L1393.0 431.0" fill="none" stroke="#23473d" stroke-width="0.9" stroke-linejoin="round"/>
<line x1="1358.0" y1="412.2" x2="1353.7" y2="404.9" stroke="#23473d" stroke-width="0.9"/>
<line x1="1358.0" y1="418.2" x2="1366.5" y2="422.4" stroke="#23473d" stroke-width="0.9"/>
<line x1="1358.0" y1="423.8" x2="1363.4" y2="424.0" stroke="#23473d" stroke-width="0.9"/>
<path d="M1374.6 408.8 L1362.2 406.4 L1358.0 412.2 L1358.0 418.2 L1358.0 423.8" fill="none" stroke="#23473d" stroke-width="0.9" stroke-linejoin="round"/>
<line x1="1425.0" y1="432.8" x2="1427.7" y2="436.0" stroke="#23473d" stroke-width="0.9"/>
<line x1="1426.7" y1="427.0" x2="1421.3" y2="423.9" stroke="#23473d" stroke-width="0.9"/>
<line x1="1434.0" y1="421.6" x2="1428.3" y2="416.6" stroke="#23473d" stroke-width="0.9"/>
<path d="M1417.2 443.1 L1425.0 432.8 L1426.7 427.0 L1434.0 421.6" fill="none" stroke="#23473d" stroke-width="0.9" stroke-linejoin="round"/>
<line x1="1405.2" y1="428.3" x2="1414.1" y2="429.4" stroke="#23473d" stroke-width="0.9"/>
<line x1="1411.2" y1="439.6" x2="1409.5" y2="443.9" stroke="#23473d" stroke-width="0.9"/>
<path d="M1404.5 414.4 L1405.2 428.3 L1407.0 436.5 L1411.2 439.6 L1420.2 443.9" fill="none" stroke="#23473d" stroke-width="0.9" stroke-linejoin="round"/>
<line x1="1374.5" y1="401.2" x2="1367.7" y2="398.2" stroke="#23473d" stroke-width="0.9"/>
<line x1="1384.2" y1="395.0" x2="1386.5" y2="398.3" stroke="#23473d" stroke-width="0.9"/>
<line x1="1405.6" y1="398.4" x2="1405.2" y2="394.2" stroke="#23473d" stroke-width="0.9"/>
<line x1="1416.2" y1="395.0" x2="1418.2" y2="399.6" stroke="#23473d" stroke-width="0.9"/>
<path d="M1369.1 410.8 L1374.5 401.2 L1376.7 395.0 L1384.2 395.0 L1392.7 397.2 L1405.6 398.4 L1416.2 395.0" fill="none" stroke="#23473d" stroke-width="0.9" stroke-linejoin="round"/>
<line x1="1397.4" y1="420.7" x2="1404.2" y2="419.9" stroke="#23473d" stroke-width="0.9"/>
<line x1="1409.5" y1="426.2" x2="1413.9" y2="418.2" stroke="#23473d" stroke-width="0.9"/>
<path d="M1386.3 410.7 L1395.0 414.3 L1397.4 420.7 L1409.5 426.2" fill="none" stroke="#23473d" stroke-width="0.9" stroke-linejoin="round"/>
<line x1="1498.6" y1="1095.8" x2="1501.3" y2="1092.0" stroke="#23473d" stroke-width="0.9"/>
<line x1="1520.8" y1="1080.9" x2="1528.4" y2="1082.6" stroke="#23473d" stroke-width="0.9"/>
<line x1="1516.7" y1="1061.6" x2="1520.4" y2="1060.0" stroke="#23473d" stroke-width="0.9"/>
<path d="M1493.2 1091.5 L1498.6 1095.8 L1509.8 1098.6 L1518.3 1093.2 L1520.8 1080.9 L1519.6 1072.2 L1516.7 1061.6" fill="none" stroke="#23473d" stroke-width="0.9" stroke-linejoin="round"/>
<line x1="1536.0" y1="1073.4" x2="1535.6" y2="1080.0" stroke="#23473d" stroke-width="0.9"/>
<line x1="1524.7" y1="1087.6" x2="1518.4" y2="1084.5" stroke="#23473d" stroke-width="0.9"/>
<line x1="1529.0" y1="1096.2" x2="1532.3" y2="1093.3" stroke="#23473d" stroke-width="0.9"/>
<line x1="1532.0" y1="1107.0" x2="1538.9" y2="1106.9" stroke="#23473d" stroke-width="0.9"/>
<line x1="1525.3" y1="1118.4" x2="1531.1" y2="1120.2" stroke="#23473d" stroke-width="0.9"/>
<path d="M1547.9 1076.5 L1536.0 1073.4 L1528.0 1077.4 L1524.7 1087.6 L1529.0 1096.2 L1532.0 1107.0 L1525.3 1118.4" fill="none" stroke="#23473d" stroke-width="0.9" stroke-linejoin="round"/>
<line x1="1522.5" y1="1046.4" x2="1523.1" y2="1051.9" stroke="#23473d" stroke-width="0.9"/>
<line x1="1530.4" y1="1046.9" x2="1530.5" y2="1039.1" stroke="#23473d" stroke-width="0.9"/>
<line x1="1537.9" y1="1044.4" x2="1541.5" y2="1050.7" stroke="#23473d" stroke-width="0.9"/>
<path d="M1513.4 1045.9 L1522.5 1046.4 L1530.4 1046.9 L1537.9 1044.4 L1546.1 1043.8 L1555.0 1043.9" fill="none" stroke="#23473d" stroke-width="0.9" stroke-linejoin="round"/>
<line x1="1412.9" y1="1121.4" x2="1418.8" y2="1119.6" stroke="#23473d" stroke-width="0.9"/>
<line x1="1414.0" y1="1112.5" x2="1406.9" y2="1112.4" stroke="#23473d" stroke-width="0.9"/>
<line x1="1423.6" y1="1083.9" x2="1427.3" y2="1088.9" stroke="#23473d" stroke-width="0.9"/>
<path d="M1415.7 1129.3 L1412.9 1121.4 L1414.0 1112.5 L1411.1 1099.1 L1417.8 1087.9 L1423.6 1083.9 L1425.3 1074.7" fill="none" stroke="#23473d" stroke-width="0.9" stroke-linejoin="round"/>
<line x1="1398.9" y1="1037.6" x2="1397.8" y2="1032.5" stroke="#23473d" stroke-width="0.9"/>
<line x1="1395.0" y1="1038.0" x2="1394.6" y2="1044.7" stroke="#23473d" stroke-width="0.9"/>
<path d="M1406.8 1035.4 L1398.9 1037.6 L1395.0 1038.0 L1395.0 1042.6 L1395.0 1054.1 L1400.0 1065.5" fill="none" stroke="#23473d" stroke-width="0.9" stroke-linejoin="round"/>
<line x1="1476.3" y1="1085.2" x2="1475.5" y2="1090.6" stroke="#23473d" stroke-width="0.9"/>
<line x1="1466.2" y1="1091.7" x2="1469.8" y2="1095.5" stroke="#23473d" stroke-width="0.9"/>
<line x1="1450.9" y1="1094.2" x2="1453.2" y2="1084.5" stroke="#23473d" stroke-width="0.9"/>
<path d="M1489.2 1087.8 L1476.3 1085.2 L1466.2 1091.7 L1457.4 1095.3 L1450.9 1094.2 L1443.0 1089.2 L1434.6 1086.3" fill="none" stroke="#23473d" stroke-width="0.9" stroke-linejoin="round"/>
<line x1="1420.4" y1="1102.4" x2="1416.4" y2="1106.3" stroke="#23473d" stroke-width="0.9"/>
<path d="M1412.1 1095.6 L1420.4 1102.4 L1426.8 1108.7 L1431.8 1114.1" fill="none" stroke="#23473d" stroke-width="0.9" stroke-linejoin="round"/>
<path d="M1544.8 1051.7 L1547.9 1038.9 L1546.1 1032.8 L1540.0 1026.9" fill="none" stroke="#23473d" stroke-width="0.9" stroke-linejoin="round"/>
<line x1="1465.3" y1="1110.2" x2="1460.8" y2="1103.1" stroke="#23473d" stroke-width="0.9"/>
<line x1="1472.4" y1="1107.0" x2="1470.5" y2="1102.3" stroke="#23473d" stroke-width="0.9"/>
<line x1="1460.1" y1="1086.6" x2="1455.8" y2="1077.9" stroke="#23473d" stroke-width="0.9"/>
<path d="M1456.9 1115.2 L1465.3 1110.2 L1472.4 1107.0 L1474.4 1101.3 L1470.9 1088.0 L1465.5 1085.0 L1460.1 1086.6" fill="none" stroke="#23473d" stroke-width="0.9" stroke-linejoin="round"/>
<line x1="1481.0" y1="1089.6" x2="1472.1" y2="1086.2" stroke="#23473d" stroke-width="0.9"/>
<line x1="1490.8" y1="1078.3" x2="1486.2" y2="1074.4" stroke="#23473d" stroke-width="0.9"/>
<line x1="1489.9" y1="1049.5" x2="1494.1" y2="1050.0" stroke="#23473d" stroke-width="0.9"/>
<path d="M1480.1 1096.4 L1481.0 1089.6 L1484.1 1084.8 L1490.8 1078.3 L1493.9 1070.7 L1489.2 1059.8 L1489.9 1049.5" fill="none" stroke="#23473d" stroke-width="0.9" stroke-linejoin="round"/>
<line x1="1465.6" y1="1036.9" x2="1472.3" y2="1035.0" stroke="#23473d" stroke-width="0.9"/>
<line x1="1467.2" y1="1030.4" x2="1473.5" y2="1033.7" stroke="#23473d" stroke-width="0.9"/>
<path d="M1461.9 1073.6 L1462.4 1068.2 L1468.0 1057.1 L1468.8 1048.2 L1465.6 1036.9 L1467.2 1030.4" fill="none" stroke="#23473d" stroke-width="0.9" stroke-linejoin="round"/>
<line x1="1697.1" y1="585.0" x2="1705.7" y2="588.6" stroke="#23473d" stroke-width="0.9"/>
<path d="M1696.7 607.5 L1699.1 602.0 L1695.2 590.5 L1697.1 585.0 L1702.1 585.0" fill="none" stroke="#23473d" stroke-width="0.9" stroke-linejoin="round"/>
<line x1="1655.6" y1="631.3" x2="1649.9" y2="626.4" stroke="#23473d" stroke-width="0.9"/>
<line x1="1645.7" y1="634.7" x2="1642.8" y2="626.0" stroke="#23473d" stroke-width="0.9"/>
<line x1="1636.6" y1="638.8" x2="1632.8" y2="631.0" stroke="#23473d" stroke-width="0.9"/>
<line x1="1630.7" y1="640.5" x2="1632.2" y2="645.9" stroke="#23473d" stroke-width="0.9"/>
<path d="M1665.8 623.3 L1655.6 631.3 L1645.7 634.7 L1636.6 638.8 L1630.7 640.5" fill="none" stroke="#23473d" stroke-width="0.9" stroke-linejoin="round"/>
<line x1="1702.2" y1="648.9" x2="1697.6" y2="656.4" stroke="#23473d" stroke-width="0.9"/>
<path d="M1723.2 680.9 L1723.2 669.4 L1721.3 662.5 L1712.6 652.1 L1702.2 648.9" fill="none" stroke="#23473d" stroke-width="0.9" stroke-linejoin="round"/>
<line x1="1728.6" y1="647.6" x2="1734.8" y2="641.5" stroke="#23473d" stroke-width="0.9"/>
<path d="M1720.0 637.8 L1728.6 647.6 L1732.1 656.4 L1734.8 662.1" fill="none" stroke="#23473d" stroke-width="0.9" stroke-linejoin="round"/>
<line x1="1702.1" y1="686.0" x2="1698.6" y2="693.0" stroke="#23473d" stroke-width="0.9"/>
<line x1="1721.1" y1="687.3" x2="1720.2" y2="691.3" stroke="#23473d" stroke-width="0.9"/>
<path d="M1670.7 671.5 L1680.7 669.2 L1691.0 673.2 L1696.5 682.5 L1702.1 686.0 L1710.8 684.8 L1721.1 687.3" fill="none" stroke="#23473d" stroke-width="0.9" stroke-linejoin="round"/>
<line x1="1739.8" y1="639.1" x2="1744.2" y2="640.7" stroke="#23473d" stroke-width="0.9"/>
<line x1="1740.9" y1="626.5" x2="1748.2" y2="630.5" stroke="#23473d" stroke-width="0.9"/>
<path d="M1738.8 647.0 L1739.8 639.1 L1737.7 632.5 L1740.9 626.5 L1746.1 617.0" fill="none" stroke="#23473d" stroke-width="0.9" stroke-linejoin="round"/>
<line x1="1697.6" y1="656.8" x2="1703.8" y2="654.9" stroke="#23473d" stroke-width="0.9"/>
<line x1="1699.7" y1="667.9" x2="1694.3" y2="670.2" stroke="#23473d" stroke-width="0.9"/>
<path d="M1688.3 635.1 L1694.0 638.5 L1697.3 649.6 L1697.6 656.8 L1699.7 667.9" fill="none" stroke="#23473d" stroke-width="0.9" stroke-linejoin="round"/>
<line x1="1683.0" y1="683.1" x2="1679.4" y2="679.8" stroke="#23473d" stroke-width="0.9"/>
<line x1="1711.5" y1="657.6" x2="1707.4" y2="652.9" stroke="#23473d" stroke-width="0.9"/>
<line x1="1716.1" y1="650.1" x2="1709.4" y2="644.4" stroke="#23473d" stroke-width="0.9"/>
<path d="M1670.1 694.9 L1676.4 693.3 L1683.0 683.1 L1692.4 675.0 L1701.6 664.4 L1711.5 657.6 L1716.1 650.1" fill="none" stroke="#23473d" stroke-width="0.9" stroke-linejoin="round"/>
<line x1="1668.4" y1="705.0" x2="1673.9" y2="705.6" stroke="#23473d" stroke-width="0.9"/>
<line x1="1672.3" y1="705.0" x2="1668.6" y2="708.3" stroke="#23473d" stroke-width="0.9"/>
<path d="M1663.7 662.0 L1660.3 672.2 L1659.3 685.5 L1667.3 695.1 L1668.6 701.2 L1668.4 705.0 L1672.3 705.0" fill="none" stroke="#23473d" stroke-width="0.9" stroke-linejoin="round"/>
<line x1="1741.2" y1="705.0" x2="1746.3" y2="707.4" stroke="#23473d" stroke-width="0.9"/>
<path d="M1745.6 677.1 L1748.5 689.8 L1746.0 696.1 L1741.2 705.0" fill="none" stroke="#23473d" stroke-width="0.9" stroke-linejoin="round"/>
<line x1="1759.0" y1="618.7" x2="1758.8" y2="609.7" stroke="#23473d" stroke-width="0.9"/>
<path d="M1778.1 613.9 L1764.9 614.9 L1759.3 618.0 L1759.0 618.7" fill="none" stroke="#23473d" stroke-width="0.9" stroke-linejoin="round"/>
<line x1="1800.6" y1="622.0" x2="1807.2" y2="628.7" stroke="#23473d" stroke-width="0.9"/>
<path d="M1786.5 641.9 L1792.2 635.9 L1791.8 630.5 L1800.6 622.0" fill="none" stroke="#23473d" stroke-width="0.9" stroke-linejoin="round"/>
<line x1="1759.0" y1="671.0" x2="1759.2" y2="677.0" stroke="#23473d" stroke-width="0.9"/>
<line x1="1759.0" y1="672.9" x2="1757.8" y2="666.5" stroke="#23473d" stroke-width="0.9"/>
<line x1="1759.0" y1="668.9" x2="1757.6" y2="672.9" stroke="#23473d" stroke-width="0.9"/>
<path d="M1766.0 671.8 L1759.0 671.0 L1759.0 672.9 L1759.0 675.4 L1759.0 670.3 L1759.0 668.9" fill="none" stroke="#23473d" stroke-width="0.9" stroke-linejoin="round"/>
<line x1="1801.4" y1="687.9" x2="1802.7" y2="680.1" stroke="#23473d" stroke-width="0.9"/>
<path d="M1807.4 688.6 L1801.4 687.9 L1790.6 680.3 L1783.3 672.6" fill="none" stroke="#23473d" stroke-width="0.9" stroke-linejoin="round"/>
<line x1="1794.7" y1="681.8" x2="1802.3" y2="686.5" stroke="#23473d" stroke-width="0.9"/>
<line x1="1785.6" y1="686.1" x2="1783.2" y2="682.6" stroke="#23473d" stroke-width="0.9"/>
<line x1="1762.7" y1="700.7" x2="1762.7" y2="696.6" stroke="#23473d" stroke-width="0.9"/>
<path d="M1799.8 668.1 L1799.9 674.7 L1794.7 681.8 L1785.6 686.1 L1782.7 695.8 L1774.7 700.8 L1762.7 700.7" fill="none" stroke="#23473d" stroke-width="0.9" stroke-linejoin="round"/>
<line x1="1795.1" y1="655.5" x2="1797.8" y2="659.6" stroke="#23473d" stroke-width="0.9"/>
<line x1="1791.6" y1="637.9" x2="1788.2" y2="640.1" stroke="#23473d" stroke-width="0.9"/>
<path d="M1787.2 659.2 L1795.1 655.5 L1796.6 650.7 L1791.6 637.9 L1791.7 630.7" fill="none" stroke="#23473d" stroke-width="0.9" stroke-linejoin="round"/>
<path d="M1462.5 604.5 L1465.5 599.6 L1472.8 595.0 L1479.2 595.0 L1477.3 595.0" fill="none" stroke="#23473d" stroke-width="0.9" stroke-linejoin="round"/>
<line x1="1509.6" y1="638.7" x2="1501.0" y2="637.6" stroke="#23473d" stroke-width="0.9"/>
<path d="M1538.1 607.2 L1526.5 611.9 L1516.2 620.7 L1511.5 625.2 L1509.6 638.7" fill="none" stroke="#23473d" stroke-width="0.9" stroke-linejoin="round"/>
<line x1="1492.8" y1="606.8" x2="1485.3" y2="605.3" stroke="#23473d" stroke-width="0.9"/>
<line x1="1486.5" y1="595.0" x2="1480.9" y2="594.6" stroke="#23473d" stroke-width="0.9"/>
<path d="M1494.3 624.5 L1492.5 619.2 L1492.8 606.8 L1490.1 598.4 L1484.5 595.0 L1486.5 595.0" fill="none" stroke="#23473d" stroke-width="0.9" stroke-linejoin="round"/>
<path d="M1458.9 682.9 L1457.1 676.8 L1460.5 671.5 L1469.4 667.0" fill="none" stroke="#23473d" stroke-width="0.9" stroke-linejoin="round"/>
<line x1="1497.2" y1="627.4" x2="1501.0" y2="628.6" stroke="#23473d" stroke-width="0.9"/>
<line x1="1496.7" y1="612.1" x2="1503.9" y2="612.2" stroke="#23473d" stroke-width="0.9"/>
<line x1="1494.4" y1="602.1" x2="1486.4" y2="605.9" stroke="#23473d" stroke-width="0.9"/>
<path d="M1500.0 648.1 L1495.1 643.4 L1494.8 636.3 L1497.2 627.4 L1497.8 617.6 L1496.7 612.1 L1494.4 602.1" fill="none" stroke="#23473d" stroke-width="0.9" stroke-linejoin="round"/>
<line x1="1471.6" y1="664.9" x2="1478.3" y2="666.1" stroke="#23473d" stroke-width="0.9"/>
<line x1="1475.3" y1="671.9" x2="1471.6" y2="673.7" stroke="#23473d" stroke-width="0.9"/>
<line x1="1498.5" y1="678.0" x2="1496.5" y2="687.5" stroke="#23473d" stroke-width="0.9"/>
<path d="M1474.8 652.0 L1471.6 664.9 L1475.3 671.9 L1488.7 675.5 L1498.5 678.0" fill="none" stroke="#23473d" stroke-width="0.9" stroke-linejoin="round"/>
<line x1="1544.8" y1="677.4" x2="1542.4" y2="683.8" stroke="#23473d" stroke-width="0.9"/>
<line x1="1552.6" y1="688.1" x2="1545.0" y2="691.4" stroke="#23473d" stroke-width="0.9"/>
<line x1="1560.2" y1="689.8" x2="1563.8" y2="682.6" stroke="#23473d" stroke-width="0.9"/>
<line x1="1565.0" y1="690.1" x2="1566.5" y2="685.0" stroke="#23473d" stroke-width="0.9"/>
<path d="M1532.1 673.7 L1539.6 676.6 L1544.8 677.4 L1552.6 688.1 L1560.2 689.8 L1565.0 690.1" fill="none" stroke="#23473d" stroke-width="0.9" stroke-linejoin="round"/>
<path d="M1585.4 763.3 L1580.3 765.1 L1575.0 764.8 L1575.0 769.1" fill="none" stroke="#23473d" stroke-width="0.9" stroke-linejoin="round"/>
<line x1="1707.4" y1="822.3" x2="1702.6" y2="818.3" stroke="#23473d" stroke-width="0.9"/>
<line x1="1690.3" y1="833.8" x2="1691.0" y2="838.7" stroke="#23473d" stroke-width="0.9"/>
<line x1="1664.4" y1="821.5" x2="1659.0" y2="825.5" stroke="#23473d" stroke-width="0.9"/>
<path d="M1711.5 818.0 L1707.4 822.3 L1702.8 830.0 L1690.3 833.8 L1684.8 832.3 L1673.1 831.6 L1664.4 821.5" fill="none" stroke="#23473d" stroke-width="0.9" stroke-linejoin="round"/>
<line x1="1622.5" y1="841.8" x2="1619.3" y2="838.2" stroke="#23473d" stroke-width="0.9"/>
<line x1="1615.2" y1="842.7" x2="1617.8" y2="849.6" stroke="#23473d" stroke-width="0.9"/>
<line x1="1604.3" y1="848.3" x2="1609.3" y2="856.2" stroke="#23473d" stroke-width="0.9"/>
<line x1="1598.6" y1="860.9" x2="1606.7" y2="864.8" stroke="#23473d" stroke-width="0.9"/>
<path d="M1627.6 837.0 L1622.5 841.8 L1615.2 842.7 L1604.3 848.3 L1598.6 860.9 L1601.4 865.0" fill="none" stroke="#23473d" stroke-width="0.9" stroke-linejoin="round"/>
<line x1="1657.3" y1="769.7" x2="1657.3" y2="762.7" stroke="#23473d" stroke-width="0.9"/>
<line x1="1671.5" y1="775.6" x2="1676.1" y2="772.9" stroke="#23473d" stroke-width="0.9"/>
<path d="M1640.5 764.0 L1645.8 769.4 L1657.3 769.7 L1666.3 770.1 L1671.5 775.6" fill="none" stroke="#23473d" stroke-width="0.9" stroke-linejoin="round"/>
<line x1="1660.5" y1="754.7" x2="1668.8" y2="755.8" stroke="#23473d" stroke-width="0.9"/>
<line x1="1658.0" y1="760.8" x2="1662.7" y2="763.0" stroke="#23473d" stroke-width="0.9"/>
<line x1="1662.2" y1="771.6" x2="1667.9" y2="769.4" stroke="#23473d" stroke-width="0.9"/>
<path d="M1660.0 747.9 L1660.5 754.7 L1658.0 760.8 L1662.2 771.6 L1669.5 779.4" fill="none" stroke="#23473d" stroke-width="0.9" stroke-linejoin="round"/>
<line x1="1597.6" y1="777.7" x2="1604.8" y2="781.6" stroke="#23473d" stroke-width="0.9"/>
<line x1="1607.2" y1="769.4" x2="1609.2" y2="773.4" stroke="#23473d" stroke-width="0.9"/>
<path d="M1592.6 783.2 L1597.6 777.7 L1607.2 769.4 L1611.4 763.5 L1623.0 760.7" fill="none" stroke="#23473d" stroke-width="0.9" stroke-linejoin="round"/>
<line x1="1643.7" y1="855.8" x2="1646.6" y2="860.0" stroke="#23473d" stroke-width="0.9"/>
<path d="M1660.7 846.7 L1652.5 851.4 L1643.7 855.8 L1640.8 862.5" fill="none" stroke="#23473d" stroke-width="0.9" stroke-linejoin="round"/>
<line x1="1575.0" y1="728.3" x2="1581.8" y2="723.5" stroke="#23473d" stroke-width="0.9"/>
<line x1="1575.0" y1="728.4" x2="1573.9" y2="723.8" stroke="#23473d" stroke-width="0.9"/>
<line x1="1575.0" y1="725.0" x2="1571.7" y2="731.7" stroke="#23473d" stroke-width="0.9"/>
<path d="M1584.2 742.5 L1575.8 733.3 L1575.0 728.3 L1575.0 728.4 L1575.0 725.0" fill="none" stroke="#23473d" stroke-width="0.9" stroke-linejoin="round"/>
<line x1="1692.2" y1="730.5" x2="1697.6" y2="730.1" stroke="#23473d" stroke-width="0.9"/>
<line x1="1710.5" y1="726.1" x2="1709.8" y2="730.1" stroke="#23473d" stroke-width="0.9"/>
<path d="M1684.5 751.4 L1692.1 744.3 L1692.2 730.5 L1689.7 725.0 L1693.0 725.0 L1697.1 725.0 L1710.5 726.1" fill="none" stroke="#23473d" stroke-width="0.9" stroke-linejoin="round"/>
<line x1="1592.9" y1="759.0" x2="1585.1" y2="753.4" stroke="#23473d" stroke-width="0.9"/>
<line x1="1575.0" y1="775.6" x2="1577.8" y2="780.3" stroke="#23473d" stroke-width="0.9"/>
<path d="M1595.3 754.4 L1592.9 759.0 L1584.9 768.3 L1579.7 769.3 L1575.0 775.6" fill="none" stroke="#23473d" stroke-width="0.9" stroke-linejoin="round"/>
<line x1="1788.2" y1="870.6" x2="1780.4" y2="864.8" stroke="#23473d" stroke-width="0.9"/>
<line x1="1792.5" y1="864.5" x2="1786.5" y2="860.6" stroke="#23473d" stroke-width="0.9"/>
<path d="M1783.7 877.3 L1788.2 870.6 L1792.5 864.5 L1805.2 860.7 L1814.2 855.0 L1818.7 855.0" fill="none" stroke="#23473d" stroke-width="0.9" stroke-linejoin="round"/>
<line x1="1741.3" y1="871.7" x2="1741.2" y2="879.0" stroke="#23473d" stroke-width="0.9"/>
<line x1="1735.0" y1="859.1" x2="1737.3" y2="853.8" stroke="#23473d" stroke-width="0.9"/>
<path d="M1758.6 875.5 L1749.0 873.1 L1741.3 871.7 L1736.7 864.5 L1735.0 859.1 L1735.0 855.0" fill="none" stroke="#23473d" stroke-width="0.9" stroke-linejoin="round"/>
<line x1="1792.1" y1="855.0" x2="1791.9" y2="845.9" stroke="#23473d" stroke-width="0.9"/>
<line x1="1807.9" y1="868.8" x2="1811.4" y2="865.8" stroke="#23473d" stroke-width="0.9"/>
<path d="M1753.3 862.7 L1761.6 857.8 L1770.0 855.0 L1781.1 855.7 L1792.1 855.0 L1800.6 859.5 L1807.9 868.8" fill="none" stroke="#23473d" stroke-width="0.9" stroke-linejoin="round"/>
<line x1="1209.0" y1="752.1" x2="1201.5" y2="750.8" stroke="#23473d" stroke-width="0.9"/>
<line x1="1211.1" y1="761.0" x2="1205.1" y2="763.1" stroke="#23473d" stroke-width="0.9"/>
<line x1="1212.3" y1="765.0" x2="1206.6" y2="766.2" stroke="#23473d" stroke-width="0.9"/>
<line x1="1213.2" y1="765.0" x2="1208.7" y2="765.1" stroke="#23473d" stroke-width="0.9"/>
<line x1="1195.4" y1="765.0" x2="1194.3" y2="755.3" stroke="#23473d" stroke-width="0.9"/>
<path d="M1208.7 742.0 L1209.0 752.1 L1211.1 761.0 L1212.3 765.0 L1213.2 765.0 L1208.3 765.0 L1195.4 765.0" fill="none" stroke="#23473d" stroke-width="0.9" stroke-linejoin="round"/>
<line x1="1201.8" y1="747.2" x2="1198.0" y2="748.5" stroke="#23473d" stroke-width="0.9"/>
<line x1="1208.0" y1="750.7" x2="1202.6" y2="758.6" stroke="#23473d" stroke-width="0.9"/>
<line x1="1214.6" y1="750.1" x2="1215.5" y2="757.8" stroke="#23473d" stroke-width="0.9"/>
<path d="M1181.8 730.3 L1193.7 731.2 L1199.3 739.1 L1201.8 747.2 L1208.0 750.7 L1214.6 750.1" fill="none" stroke="#23473d" stroke-width="0.9" stroke-linejoin="round"/>
<line x1="1806.6" y1="1135.5" x2="1809.1" y2="1127.0" stroke="#23473d" stroke-width="0.9"/>
<line x1="1800.0" y1="1124.3" x2="1792.3" y2="1128.7" stroke="#23473d" stroke-width="0.9"/>
<path d="M1823.3 1134.3 L1816.0 1137.3 L1806.6 1135.5 L1800.0 1124.3" fill="none" stroke="#23473d" stroke-width="0.9" stroke-linejoin="round"/>
<line x1="1676.3" y1="1192.6" x2="1677.2" y2="1196.6" stroke="#23473d" stroke-width="0.9"/>
<line x1="1664.4" y1="1205.0" x2="1666.3" y2="1209.8" stroke="#23473d" stroke-width="0.9"/>
<path d="M1686.2 1189.3 L1676.3 1192.6 L1672.1 1203.2 L1664.4 1205.0" fill="none" stroke="#23473d" stroke-width="0.9" stroke-linejoin="round"/>
<line x1="1734.6" y1="1163.8" x2="1741.5" y2="1165.5" stroke="#23473d" stroke-width="0.9"/>
<line x1="1743.1" y1="1176.1" x2="1750.1" y2="1172.0" stroke="#23473d" stroke-width="0.9"/>
<line x1="1745.9" y1="1181.7" x2="1741.4" y2="1185.0" stroke="#23473d" stroke-width="0.9"/>
<path d="M1736.6 1155.3 L1734.6 1163.8 L1737.8 1168.5 L1743.1 1176.1 L1745.9 1181.7" fill="none" stroke="#23473d" stroke-width="0.9" stroke-linejoin="round"/>
<line x1="1656.7" y1="1190.6" x2="1655.3" y2="1198.0" stroke="#23473d" stroke-width="0.9"/>
<path d="M1667.3 1190.4 L1656.7 1190.6 L1650.3 1184.3 L1645.2 1182.5 L1645.0 1176.1 L1645.0 1168.3" fill="none" stroke="#23473d" stroke-width="0.9" stroke-linejoin="round"/>
<line x1="1829.0" y1="1137.4" x2="1824.5" y2="1134.9" stroke="#23473d" stroke-width="0.9"/>
<path d="M1817.0 1149.6 L1828.1 1149.5 L1829.0 1148.1 L1829.0 1137.4 L1829.0 1136.1" fill="none" stroke="#23473d" stroke-width="0.9" stroke-linejoin="round"/>
<line x1="1657.7" y1="1159.4" x2="1655.1" y2="1153.6" stroke="#23473d" stroke-width="0.9"/>
<line x1="1650.7" y1="1163.3" x2="1648.2" y2="1157.8" stroke="#23473d" stroke-width="0.9"/>
<line x1="1645.6" y1="1173.5" x2="1637.9" y2="1169.5" stroke="#23473d" stroke-width="0.9"/>
<line x1="1645.0" y1="1189.6" x2="1635.3" y2="1189.3" stroke="#23473d" stroke-width="0.9"/>
<path d="M1670.0 1153.4 L1657.7 1159.4 L1650.7 1163.3 L1645.6 1173.5 L1645.0 1181.4 L1645.0 1189.6 L1650.4 1202.1" fill="none" stroke="#23473d" stroke-width="0.9" stroke-linejoin="round"/>
<path d="M1143.6 255.9 L1148.6 263.4 L1152.8 270.9 L1163.7 275.5 L1175.7 271.5 L1180.9 272.3" fill="none" stroke="#23473d" stroke-width="0.9" stroke-linejoin="round"/>
<line x1="1140.4" y1="231.0" x2="1130.9" y2="230.9" stroke="#23473d" stroke-width="0.9"/>
<line x1="1148.6" y1="231.0" x2="1153.4" y2="234.0" stroke="#23473d" stroke-width="0.9"/>
<line x1="1156.9" y1="231.0" x2="1157.9" y2="240.2" stroke="#23473d" stroke-width="0.9"/>
<line x1="1162.6" y1="233.3" x2="1165.3" y2="224.9" stroke="#23473d" stroke-width="0.9"/>
<path d="M1138.7 236.7 L1140.4 231.0 L1148.6 231.0 L1156.9 231.0 L1162.6 233.3" fill="none" stroke="#23473d" stroke-width="0.9" stroke-linejoin="round"/>
<line x1="1352.6" y1="532.4" x2="1350.5" y2="528.2" stroke="#23473d" stroke-width="0.9"/>
<line x1="1368.0" y1="535.4" x2="1366.9" y2="530.6" stroke="#23473d" stroke-width="0.9"/>
<line x1="1368.0" y1="543.4" x2="1363.5" y2="546.6" stroke="#23473d" stroke-width="0.9"/>
<line x1="1368.0" y1="545.0" x2="1372.2" y2="537.5" stroke="#23473d" stroke-width="0.9"/>
<path d="M1340.4 535.9 L1352.6 532.4 L1363.1 537.3 L1368.0 535.4 L1368.0 536.0 L1368.0 543.4 L1368.0 545.0" fill="none" stroke="#23473d" stroke-width="0.9" stroke-linejoin="round"/>
<line x1="1349.0" y1="536.5" x2="1350.0" y2="545.9" stroke="#23473d" stroke-width="0.9"/>
<path d="M1337.8 536.0 L1349.0 536.5 L1354.1 539.2 L1365.3 542.6" fill="none" stroke="#23473d" stroke-width="0.9" stroke-linejoin="round"/>
<line x1="1341.3" y1="497.8" x2="1340.8" y2="492.7" stroke="#23473d" stroke-width="0.9"/>
<path d="M1310.5 503.6 L1317.8 500.2 L1330.3 498.8 L1341.3 497.8 L1350.9 505.8 L1357.3 506.6 L1364.2 504.2" fill="none" stroke="#23473d" stroke-width="0.9" stroke-linejoin="round"/>
<line x1="1313.4" y1="513.3" x2="1314.5" y2="518.7" stroke="#23473d" stroke-width="0.9"/>
<line x1="1336.0" y1="503.0" x2="1329.4" y2="497.6" stroke="#23473d" stroke-width="0.9"/>
<path d="M1302.3 513.9 L1313.4 513.3 L1322.4 513.1 L1329.8 510.9 L1336.0 503.0 L1336.9 495.0" fill="none" stroke="#23473d" stroke-width="0.9" stroke-linejoin="round"/>
<line x1="1036.9" y1="1017.2" x2="1032.2" y2="1014.0" stroke="#23473d" stroke-width="0.9"/>
<line x1="1040.4" y1="1006.5" x2="1033.7" y2="1005.6" stroke="#23473d" stroke-width="0.9"/>
<path d="M1033.1 1020.6 L1036.9 1017.2 L1040.4 1006.5 L1043.6 999.6" fill="none" stroke="#23473d" stroke-width="0.9" stroke-linejoin="round"/>
<line x1="1024.2" y1="996.1" x2="1030.1" y2="1002.5" stroke="#23473d" stroke-width="0.9"/>
<line x1="1028.3" y1="988.9" x2="1036.3" y2="994.2" stroke="#23473d" stroke-width="0.9"/>
<line x1="1033.4" y1="985.0" x2="1030.9" y2="981.7" stroke="#23473d" stroke-width="0.9"/>
<line x1="1037.0" y1="985.0" x2="1029.3" y2="981.8" stroke="#23473d" stroke-width="0.9"/>
<line x1="1039.8" y1="985.0" x2="1045.9" y2="986.1" stroke="#23473d" stroke-width="0.9"/>
<path d="M1012.3 1008.7 L1019.8 1000.1 L1024.2 996.1 L1028.3 988.9 L1033.4 985.0 L1037.0 985.0 L1039.8 985.0" fill="none" stroke="#23473d" stroke-width="0.9" stroke-linejoin="round"/>
<path d="M903.0 293.0 C906.2 297.5 916.3 313.2 922.0 320.0 C927.7 326.8 931.8 330.8 937.0 334.0 C942.2 337.2 949.8 336.0 953.0 339.0 C956.2 342.0 946.0 349.3 956.0 352.0 C966.0 354.7 1003.5 354.5 1013.0 355.0" fill="none" stroke="#2d5d4f" stroke-width="1.1" stroke-linecap="round" stroke-linejoin="round"/>
<path d="M956.0 352.0 C955.0 356.2 953.7 371.0 950.0 377.0 C946.3 383.0 937.5 383.7 934.0 388.0 C930.5 392.3 929.8 400.5 929.0 403.0" fill="none" stroke="#2d5d4f" stroke-width="1.1" stroke-linecap="round" stroke-linejoin="round"/>
<path d="M1012.0 272.0 C1012.0 289.0 1014.0 349.3 1012.0 374.0 C1010.0 398.7 1005.5 404.7 1000.0 420.0 C994.5 435.3 984.3 448.3 979.0 466.0 C973.7 483.7 964.8 513.7 968.0 526.0 C971.2 538.3 993.0 537.7 998.0 540.0" fill="none" stroke="#2d5d4f" stroke-width="1.1" stroke-linecap="round" stroke-linejoin="round"/>
<path d="M1088.0 272.0 C1088.7 277.2 1090.7 290.3 1092.0 303.0 C1093.3 315.7 1094.2 335.3 1096.0 348.0 C1097.8 360.7 1103.0 363.7 1103.0 379.0 C1103.0 394.3 1096.3 428.8 1096.0 440.0 C1095.7 451.2 1100.2 445.0 1101.0 446.0" fill="none" stroke="#2d5d4f" stroke-width="1.1" stroke-linecap="round" stroke-linejoin="round"/>
<path d="M1013.0 360.0 L1103.0 360.0" fill="none" stroke="#2d5d4f" stroke-width="1.1" stroke-linecap="round" stroke-linejoin="round"/>
<path d="M1276.0 264.0 C1282.3 264.5 1299.5 266.0 1314.0 267.0 C1328.5 268.0 1346.2 270.8 1363.0 270.0 C1379.8 269.2 1399.5 266.0 1415.0 262.0 C1430.5 258.0 1445.2 250.3 1456.0 246.0 C1466.8 241.7 1476.0 237.7 1480.0 236.0" fill="none" stroke="#2d5d4f" stroke-width="1.1" stroke-linecap="round" stroke-linejoin="round"/>
<path d="M1297.0 270.0 C1296.7 276.7 1291.3 299.0 1295.0 310.0 C1298.7 321.0 1313.2 334.0 1319.0 336.0 C1324.8 338.0 1328.0 327.5 1330.0 322.0 C1332.0 316.5 1325.5 305.3 1331.0 303.0 C1336.5 300.7 1357.7 307.2 1363.0 308.0" fill="none" stroke="#2d5d4f" stroke-width="1.1" stroke-linecap="round" stroke-linejoin="round"/>
<path d="M1553.0 236.0 C1555.8 244.0 1569.2 273.0 1570.0 284.0 C1570.8 295.0 1562.3 297.3 1558.0 302.0 C1553.7 306.7 1546.3 310.3 1544.0 312.0" fill="none" stroke="#2d5d4f" stroke-width="1.1" stroke-linecap="round" stroke-linejoin="round"/>
<path d="M1418.0 288.0 L1429.0 317.0" fill="none" stroke="#2d5d4f" stroke-width="1.1" stroke-linecap="round" stroke-linejoin="round"/>
<path d="M1677.0 236.0 C1676.8 238.8 1674.5 251.5 1676.0 253.0 C1677.5 254.5 1676.8 245.5 1686.0 245.0 C1695.2 244.5 1719.5 249.2 1731.0 250.0 C1742.5 250.8 1751.0 250.0 1755.0 250.0" fill="none" stroke="#2d5d4f" stroke-width="1.1" stroke-linecap="round" stroke-linejoin="round"/>
<path d="M1636.0 272.0 C1639.7 270.8 1652.2 265.5 1658.0 265.0 C1663.8 264.5 1665.7 263.2 1671.0 269.0 C1676.3 274.8 1681.8 291.8 1690.0 300.0 C1698.2 308.2 1715.0 315.0 1720.0 318.0" fill="none" stroke="#2d5d4f" stroke-width="1.1" stroke-linecap="round" stroke-linejoin="round"/>
<path d="M1769.0 374.0 C1771.3 375.7 1773.8 376.0 1783.0 384.0 C1792.2 392.0 1817.2 415.7 1824.0 422.0" fill="none" stroke="#2d5d4f" stroke-width="1.1" stroke-linecap="round" stroke-linejoin="round"/>
<path d="M1767.0 506.0 L1824.0 521.0" fill="none" stroke="#2d5d4f" stroke-width="1.1" stroke-linecap="round" stroke-linejoin="round"/>
<path d="M1724.0 587.0 C1723.5 598.7 1722.2 638.8 1721.0 657.0 C1719.8 675.2 1717.7 689.5 1717.0 696.0" fill="none" stroke="#2d5d4f" stroke-width="1.1" stroke-linecap="round" stroke-linejoin="round"/>
<path d="M1627.0 614.0 C1624.2 618.0 1615.7 628.7 1610.0 638.0 C1604.3 647.3 1599.7 659.7 1593.0 670.0 C1586.3 680.3 1573.8 695.0 1570.0 700.0" fill="none" stroke="#2d5d4f" stroke-width="1.1" stroke-linecap="round" stroke-linejoin="round"/>
<path d="M1714.0 659.0 C1719.7 662.2 1739.5 676.2 1748.0 678.0 C1756.5 679.8 1752.3 670.8 1765.0 670.0 C1777.7 669.2 1814.2 672.5 1824.0 673.0" fill="none" stroke="#2d5d4f" stroke-width="1.1" stroke-linecap="round" stroke-linejoin="round"/>
<path d="M1401.0 452.0 C1403.3 450.5 1410.3 445.0 1415.0 443.0 C1419.7 441.0 1426.7 440.5 1429.0 440.0" fill="none" stroke="#2d5d4f" stroke-width="1.1" stroke-linecap="round" stroke-linejoin="round"/>
<path d="M1063.0 520.0 C1068.0 517.8 1082.3 509.3 1093.0 507.0 C1103.7 504.7 1115.8 507.2 1127.0 506.0 C1138.2 504.8 1141.8 501.0 1160.0 500.0 C1178.2 499.0 1214.7 500.8 1236.0 500.0 C1257.3 499.2 1273.5 494.0 1288.0 495.0 C1302.5 496.0 1310.5 506.5 1323.0 506.0 C1335.5 505.5 1356.3 494.3 1363.0 492.0" fill="none" stroke="#2d5d4f" stroke-width="1.1" stroke-linecap="round" stroke-linejoin="round"/>
<path d="M1017.0 557.0 C1015.8 562.0 1010.7 576.3 1010.0 587.0 C1009.3 597.7 1011.5 614.2 1013.0 621.0 C1014.5 627.8 1018.3 625.0 1019.0 628.0 C1019.7 631.0 1019.7 627.7 1017.0 639.0 C1014.3 650.3 1005.3 686.5 1003.0 696.0" fill="none" stroke="#2d5d4f" stroke-width="1.1" stroke-linecap="round" stroke-linejoin="round"/>
<path d="M1012.0 573.0 C1019.7 575.8 1047.3 586.0 1058.0 590.0 C1068.7 594.0 1068.8 597.0 1076.0 597.0 C1083.2 597.0 1091.5 593.2 1101.0 590.0 C1110.5 586.8 1119.8 583.0 1133.0 578.0 C1146.2 573.0 1165.5 565.5 1180.0 560.0 C1194.5 554.5 1213.3 547.5 1220.0 545.0" fill="none" stroke="#2d5d4f" stroke-width="1.1" stroke-linecap="round" stroke-linejoin="round"/>
<path d="M1019.0 635.0 C1021.8 637.0 1030.0 640.7 1036.0 647.0 C1042.0 653.3 1045.0 665.8 1055.0 673.0 C1065.0 680.2 1084.8 694.0 1096.0 690.0 C1107.2 686.0 1111.3 664.0 1122.0 649.0 C1132.7 634.0 1153.7 608.2 1160.0 600.0" fill="none" stroke="#2d5d4f" stroke-width="1.1" stroke-linecap="round" stroke-linejoin="round"/>
<path d="M965.0 466.0 C965.0 474.3 964.3 506.0 965.0 516.0 C965.7 526.0 968.3 524.3 969.0 526.0" fill="none" stroke="#2d5d4f" stroke-width="1.1" stroke-linecap="round" stroke-linejoin="round"/>
<path d="M906.0 756.0 C914.2 753.2 942.5 744.7 955.0 739.0 C967.5 733.3 974.5 729.2 981.0 722.0 C987.5 714.8 990.8 706.3 994.0 696.0 C997.2 685.7 998.5 669.3 1000.0 660.0 C1001.5 650.7 1002.5 643.3 1003.0 640.0" fill="none" stroke="#2d5d4f" stroke-width="1.1" stroke-linecap="round" stroke-linejoin="round"/>
<path d="M1133.0 755.0 C1126.3 763.0 1103.2 793.0 1093.0 803.0 C1082.8 813.0 1075.5 813.0 1072.0 815.0" fill="none" stroke="#2d5d4f" stroke-width="1.1" stroke-linecap="round" stroke-linejoin="round"/>
<path d="M948.0 862.0 C948.3 866.0 947.5 878.8 950.0 886.0 C952.5 893.2 953.5 901.0 963.0 905.0 C972.5 909.0 996.8 910.7 1007.0 910.0 C1017.2 909.3 1017.8 900.5 1024.0 901.0 C1030.2 901.5 1039.5 908.8 1044.0 913.0 C1048.5 917.2 1049.8 923.8 1051.0 926.0" fill="none" stroke="#2d5d4f" stroke-width="1.1" stroke-linecap="round" stroke-linejoin="round"/>
<path d="M1198.0 696.0 C1191.8 700.7 1171.8 714.2 1161.0 724.0 C1150.2 733.8 1137.7 749.8 1133.0 755.0" fill="none" stroke="#2d5d4f" stroke-width="1.1" stroke-linecap="round" stroke-linejoin="round"/>
<path d="M1136.0 824.0 C1138.3 822.2 1143.7 808.5 1150.0 813.0 C1156.3 817.5 1166.8 842.0 1174.0 851.0 C1181.2 860.0 1185.7 867.0 1193.0 867.0 C1200.3 867.0 1210.8 851.7 1218.0 851.0 C1225.2 850.3 1230.0 860.2 1236.0 863.0 C1242.0 865.8 1243.8 867.3 1254.0 868.0 C1264.2 868.7 1282.7 869.2 1297.0 867.0 C1311.3 864.8 1332.8 857.0 1340.0 855.0" fill="none" stroke="#2d5d4f" stroke-width="1.1" stroke-linecap="round" stroke-linejoin="round"/>
<path d="M1193.0 867.0 L1185.0 886.0" fill="none" stroke="#2d5d4f" stroke-width="1.1" stroke-linecap="round" stroke-linejoin="round"/>
<path d="M1544.0 736.0 C1543.2 740.8 1538.2 753.0 1539.0 765.0 C1539.8 777.0 1545.3 795.0 1549.0 808.0 C1552.7 821.0 1557.5 833.8 1561.0 843.0 C1564.5 852.2 1568.5 859.7 1570.0 863.0" fill="none" stroke="#2d5d4f" stroke-width="1.1" stroke-linecap="round" stroke-linejoin="round"/>
<path d="M1561.0 713.0 L1578.0 701.0" fill="none" stroke="#2d5d4f" stroke-width="1.1" stroke-linecap="round" stroke-linejoin="round"/>
<path d="M1363.0 860.0 C1367.3 865.7 1381.5 883.0 1389.0 894.0 C1396.5 905.0 1404.8 920.7 1408.0 926.0" fill="none" stroke="#2d5d4f" stroke-width="1.1" stroke-linecap="round" stroke-linejoin="round"/>
<path d="M1461.0 926.0 C1462.5 919.3 1465.3 896.2 1470.0 886.0 C1474.7 875.8 1485.8 868.5 1489.0 865.0" fill="none" stroke="#2d5d4f" stroke-width="1.1" stroke-linecap="round" stroke-linejoin="round"/>
<path d="M1777.0 926.0 C1781.2 933.0 1794.2 957.5 1802.0 968.0 C1809.8 978.5 1820.3 985.5 1824.0 989.0" fill="none" stroke="#2d5d4f" stroke-width="1.1" stroke-linecap="round" stroke-linejoin="round"/>
<path d="M924.0 936.0 C930.8 941.2 956.8 954.3 965.0 967.0 C973.2 979.7 970.3 1001.7 973.0 1012.0 C975.7 1022.3 979.7 1026.2 981.0 1029.0" fill="none" stroke="#2d5d4f" stroke-width="1.1" stroke-linecap="round" stroke-linejoin="round"/>
<path d="M906.0 1016.0 C911.7 1020.8 932.7 1039.2 940.0 1045.0 C947.3 1050.8 948.3 1050.0 950.0 1051.0" fill="none" stroke="#2d5d4f" stroke-width="1.1" stroke-linecap="round" stroke-linejoin="round"/>
<path d="M1363.0 926.0 C1357.5 932.2 1339.2 951.7 1330.0 963.0 C1320.8 974.3 1312.0 984.7 1308.0 994.0 C1304.0 1003.3 1309.2 1011.2 1306.0 1019.0 C1302.8 1026.8 1291.8 1037.3 1289.0 1041.0" fill="none" stroke="#2d5d4f" stroke-width="1.1" stroke-linecap="round" stroke-linejoin="round"/>
<path d="M1289.0 1060.0 C1290.0 1066.8 1290.2 1091.8 1295.0 1101.0 C1299.8 1110.2 1310.7 1111.3 1318.0 1115.0 C1325.3 1118.7 1331.5 1116.8 1339.0 1123.0 C1346.5 1129.2 1359.0 1147.2 1363.0 1152.0" fill="none" stroke="#2d5d4f" stroke-width="1.1" stroke-linecap="round" stroke-linejoin="round"/>
<path d="M1265.0 1099.0 C1265.7 1093.5 1265.0 1072.8 1269.0 1066.0 C1273.0 1059.2 1285.7 1059.3 1289.0 1058.0" fill="none" stroke="#2d5d4f" stroke-width="1.1" stroke-linecap="round" stroke-linejoin="round"/>
<path d="M1184.0 1068.0 C1192.0 1066.7 1223.0 1059.7 1232.0 1060.0 C1241.0 1060.3 1235.0 1065.7 1238.0 1070.0 C1241.0 1074.3 1249.7 1081.5 1250.0 1086.0 C1250.3 1090.5 1241.7 1095.2 1240.0 1097.0" fill="none" stroke="#2d5d4f" stroke-width="1.1" stroke-linecap="round" stroke-linejoin="round"/>
<path d="M1230.0 1021.0 L1232.0 1060.0" fill="none" stroke="#2d5d4f" stroke-width="1.1" stroke-linecap="round" stroke-linejoin="round"/>
<path d="M1141.0 1175.0 L1164.0 1200.0" fill="none" stroke="#2d5d4f" stroke-width="1.1" stroke-linecap="round" stroke-linejoin="round"/>
<path d="M1410.0 949.0 L1462.0 928.0" fill="none" stroke="#2d5d4f" stroke-width="1.1" stroke-linecap="round" stroke-linejoin="round"/>
<path d="M1542.0 926.0 C1546.5 928.7 1560.5 938.2 1569.0 942.0 C1577.5 945.8 1589.0 947.8 1593.0 949.0" fill="none" stroke="#2d5d4f" stroke-width="1.1" stroke-linecap="round" stroke-linejoin="round"/>
<path d="M1363.0 986.0 C1369.8 987.0 1392.7 990.7 1404.0 992.0 C1415.3 993.3 1426.5 993.7 1431.0 994.0" fill="none" stroke="#2d5d4f" stroke-width="1.1" stroke-linecap="round" stroke-linejoin="round"/>
<path d="M1593.0 1112.0 L1645.0 1112.0" fill="none" stroke="#2d5d4f" stroke-width="1.1" stroke-linecap="round" stroke-linejoin="round"/>
<path d="M1682.0 1149.0 C1681.2 1151.3 1676.2 1160.0 1677.0 1163.0 C1677.8 1166.0 1682.2 1166.7 1687.0 1167.0 C1691.8 1167.3 1703.2 1166.8 1706.0 1165.0 C1708.8 1163.2 1708.0 1158.7 1704.0 1156.0 C1700.0 1153.3 1688.7 1146.8 1682.0 1149.0 C1675.3 1151.2 1667.0 1165.7 1664.0 1169.0" fill="none" stroke="#2d5d4f" stroke-width="1.1" stroke-linecap="round" stroke-linejoin="round"/>
<path d="M1668.0 1127.0 C1676.5 1125.7 1705.0 1118.0 1719.0 1119.0 C1733.0 1120.0 1745.2 1126.8 1752.0 1133.0 C1758.8 1139.2 1758.7 1144.8 1760.0 1156.0 C1761.3 1167.2 1760.0 1192.7 1760.0 1200.0" fill="none" stroke="#2d5d4f" stroke-width="1.1" stroke-linecap="round" stroke-linejoin="round"/>
<path d="M1824.0 700.0 L1808.0 740.0" fill="none" stroke="#2d5d4f" stroke-width="1.1" stroke-linecap="round" stroke-linejoin="round"/>
<path d="M1480.0 1131.0 L1482.0 1200.0" fill="none" stroke="#2d5d4f" stroke-width="1.1" stroke-linecap="round" stroke-linejoin="round"/>
<path d="M906.0 1136.0 C908.0 1136.7 914.3 1136.0 918.0 1140.0 C921.7 1144.0 927.3 1153.3 928.0 1160.0 C928.7 1166.7 922.5 1173.3 922.0 1180.0 C921.5 1186.7 924.5 1196.7 925.0 1200.0" fill="none" stroke="#2d5d4f" stroke-width="1.1" stroke-linecap="round" stroke-linejoin="round"/>
<path d="M1025.0 1040.0 L1050.0 1062.0" fill="none" stroke="#2d5d4f" stroke-width="1.1" stroke-linecap="round" stroke-linejoin="round"/>
<path d="M1697.0 896.0 C1705.0 900.5 1729.2 911.2 1745.0 923.0 C1760.8 934.8 1778.8 952.3 1792.0 967.0 C1805.2 981.7 1818.7 1003.7 1824.0 1011.0" fill="none" stroke="#2d5d4f" stroke-width="1.1" stroke-linecap="round" stroke-linejoin="round"/>
<path d="M1625.0 884.0 C1629.2 881.3 1635.3 870.7 1650.0 868.0 C1664.7 865.3 1695.8 864.0 1713.0 868.0 C1730.2 872.0 1744.3 885.2 1753.0 892.0 C1761.7 898.8 1753.2 904.7 1765.0 909.0 C1776.8 913.3 1814.2 916.5 1824.0 918.0" fill="none" stroke="#2d5d4f" stroke-width="1.1" stroke-linecap="round" stroke-linejoin="round"/>
<path d="M1363.0 701.0 C1368.8 704.5 1389.3 711.3 1398.0 722.0 C1406.7 732.7 1409.8 753.0 1415.0 765.0 C1420.2 777.0 1420.5 785.3 1429.0 794.0 C1437.5 802.7 1456.7 808.8 1466.0 817.0 C1475.3 825.2 1481.2 834.5 1485.0 843.0 C1488.8 851.5 1483.5 858.0 1489.0 868.0 C1494.5 878.0 1508.8 893.3 1518.0 903.0 C1527.2 912.7 1539.7 922.2 1544.0 926.0" fill="none" stroke="#3a7764" stroke-width="1.35" stroke-linecap="round" stroke-linejoin="round"/>
<path d="M906.0 785.0 C912.7 783.7 933.3 781.2 946.0 777.0 C958.7 772.8 971.8 762.8 982.0 760.0 C992.2 757.2 998.3 759.2 1007.0 760.0 C1015.7 760.8 1029.5 764.2 1034.0 765.0" fill="none" stroke="#3a7764" stroke-width="1.35" stroke-linecap="round" stroke-linejoin="round"/>
<path d="M1257.0 383.0 C1260.8 384.3 1272.0 390.2 1280.0 391.0 C1288.0 391.8 1297.8 386.8 1305.0 388.0 C1312.2 389.2 1313.3 395.7 1323.0 398.0 C1332.7 400.3 1351.8 404.7 1363.0 402.0 C1374.2 399.3 1381.3 389.5 1390.0 382.0 C1398.7 374.5 1408.3 360.0 1415.0 357.0 C1421.7 354.0 1427.5 362.8 1430.0 364.0" fill="none" stroke="#3a7764" stroke-width="1.35" stroke-linecap="round" stroke-linejoin="round"/>
<path d="M1189.0 272.0 C1188.8 285.0 1187.8 325.3 1188.0 350.0 C1188.2 374.7 1189.8 400.7 1190.0 420.0 C1190.2 439.3 1189.2 458.3 1189.0 466.0" fill="none" stroke="#3a7764" stroke-width="1.35" stroke-linecap="round" stroke-linejoin="round"/>
<path d="M1276.0 272.0 C1273.5 276.0 1264.7 287.7 1261.0 296.0 C1257.3 304.3 1254.0 314.5 1254.0 322.0 C1254.0 329.5 1261.0 331.8 1261.0 341.0 C1261.0 350.2 1257.0 367.2 1254.0 377.0 C1251.0 386.8 1245.7 385.2 1243.0 400.0 C1240.3 414.8 1239.2 446.0 1238.0 466.0 C1236.8 486.0 1236.3 511.0 1236.0 520.0" fill="none" stroke="#3a7764" stroke-width="1.35" stroke-linecap="round" stroke-linejoin="round"/>
<path d="M1363.0 312.0 C1367.3 308.8 1379.8 297.0 1389.0 293.0 C1398.2 289.0 1408.0 290.8 1418.0 288.0 C1428.0 285.2 1438.0 278.7 1449.0 276.0 C1460.0 273.3 1469.7 272.5 1484.0 272.0 C1498.3 271.5 1523.5 274.7 1535.0 273.0 C1546.5 271.3 1549.2 266.5 1553.0 262.0 C1556.8 257.5 1557.8 250.3 1558.0 246.0 C1558.2 241.7 1554.7 237.7 1554.0 236.0" fill="none" stroke="#3a7764" stroke-width="1.35" stroke-linecap="round" stroke-linejoin="round"/>
<path d="M1634.0 587.0 C1633.2 590.2 1614.3 601.7 1629.0 606.0 C1643.7 610.3 1689.5 610.5 1722.0 613.0 C1754.5 615.5 1807.0 619.7 1824.0 621.0" fill="none" stroke="#3a7764" stroke-width="1.35" stroke-linecap="round" stroke-linejoin="round"/>
<path d="M1805.0 696.0 C1803.0 726.2 1795.8 838.7 1793.0 877.0 C1790.2 915.3 1789.3 905.5 1788.0 926.0 C1786.7 946.5 1785.5 987.7 1785.0 1000.0" fill="none" stroke="#3a7764" stroke-width="1.35" stroke-linecap="round" stroke-linejoin="round"/>
<path d="M1716.0 696.0 C1716.0 707.5 1716.5 749.5 1716.0 765.0 C1715.5 780.5 1714.0 776.0 1713.0 789.0 C1712.0 802.0 1710.5 834.0 1710.0 843.0" fill="none" stroke="#3a7764" stroke-width="1.35" stroke-linecap="round" stroke-linejoin="round"/>
<path d="M1593.0 1026.0 C1600.0 1027.5 1621.0 1032.7 1635.0 1035.0 C1649.0 1037.3 1661.7 1035.5 1677.0 1040.0 C1692.3 1044.5 1716.8 1057.5 1727.0 1062.0 C1737.2 1066.5 1734.2 1068.0 1738.0 1067.0 C1741.8 1066.0 1744.8 1058.0 1750.0 1056.0 C1755.2 1054.0 1756.7 1054.0 1769.0 1055.0 C1781.3 1056.0 1814.8 1060.8 1824.0 1062.0" fill="none" stroke="#3a7764" stroke-width="1.35" stroke-linecap="round" stroke-linejoin="round"/>
<path d="M1363.0 1090.0 C1371.2 1091.8 1391.2 1098.8 1412.0 1101.0 C1432.8 1103.2 1467.3 1104.3 1488.0 1103.0 C1508.7 1101.7 1527.3 1098.5 1536.0 1093.0 C1544.7 1087.5 1538.0 1074.8 1540.0 1070.0 C1542.0 1065.2 1539.2 1065.0 1548.0 1064.0 C1556.8 1063.0 1585.5 1064.0 1593.0 1064.0" fill="none" stroke="#3a7764" stroke-width="1.35" stroke-linecap="round" stroke-linejoin="round"/>
<path d="M1540.0 926.0 C1544.2 929.0 1551.8 939.2 1565.0 944.0 C1578.2 948.8 1595.7 952.2 1619.0 955.0 C1642.3 957.8 1688.0 958.0 1705.0 961.0 C1722.0 964.0 1714.3 965.3 1721.0 973.0 C1727.7 980.7 1737.2 995.7 1745.0 1007.0 C1752.8 1018.3 1762.8 1034.0 1768.0 1041.0 C1773.2 1048.0 1766.7 1044.5 1776.0 1049.0 C1785.3 1053.5 1816.0 1064.8 1824.0 1068.0" fill="none" stroke="#3a7764" stroke-width="1.35" stroke-linecap="round" stroke-linejoin="round"/>
<path d="M1593.0 827.0 C1596.7 825.3 1602.0 821.0 1615.0 817.0 C1628.0 813.0 1654.7 807.7 1671.0 803.0 C1687.3 798.3 1700.7 786.2 1713.0 789.0 C1725.3 791.8 1734.8 814.2 1745.0 820.0 C1755.2 825.8 1766.3 825.2 1774.0 824.0 C1781.7 822.8 1782.7 814.8 1791.0 813.0 C1799.3 811.2 1818.5 813.0 1824.0 813.0" fill="none" stroke="#3a7764" stroke-width="1.35" stroke-linecap="round" stroke-linejoin="round"/>
<path d="M1484.0 696.0 C1488.3 699.5 1500.0 710.3 1510.0 717.0 C1520.0 723.7 1530.2 732.7 1544.0 736.0 C1557.8 739.3 1580.2 737.3 1593.0 737.0 C1605.8 736.7 1614.3 731.7 1621.0 734.0 C1627.7 736.3 1625.7 745.8 1633.0 751.0 C1640.3 756.2 1655.8 763.3 1665.0 765.0 C1674.2 766.7 1678.5 761.0 1688.0 761.0 C1697.5 761.0 1711.7 765.8 1722.0 765.0 C1732.3 764.2 1733.0 756.5 1750.0 756.0 C1767.0 755.5 1811.7 761.0 1824.0 762.0" fill="none" stroke="#3a7764" stroke-width="1.35" stroke-linecap="round" stroke-linejoin="round"/>
<path d="M1016.0 1035.0 C1016.3 1037.0 1011.5 1038.5 1018.0 1047.0 C1024.5 1055.5 1048.5 1074.3 1055.0 1086.0 C1061.5 1097.7 1052.2 1106.7 1057.0 1117.0 C1061.8 1127.3 1075.3 1142.2 1084.0 1148.0 C1092.7 1153.8 1103.8 1149.7 1109.0 1152.0 C1114.2 1154.3 1111.0 1159.5 1115.0 1162.0 C1119.0 1164.5 1128.3 1164.8 1133.0 1167.0 C1137.7 1169.2 1136.2 1176.5 1143.0 1175.0 C1149.8 1173.5 1168.5 1163.2 1174.0 1158.0 C1179.5 1152.8 1169.2 1146.5 1176.0 1144.0 C1182.8 1141.5 1204.3 1142.3 1215.0 1143.0 C1225.7 1143.7 1235.8 1147.2 1240.0 1148.0" fill="none" stroke="#3a7764" stroke-width="1.35" stroke-linecap="round" stroke-linejoin="round"/>
<path d="M983.0 1025.0 C985.5 1025.8 989.7 1030.0 998.0 1030.0 C1006.3 1030.0 1025.5 1027.7 1033.0 1025.0 C1040.5 1022.3 1038.0 1014.5 1043.0 1014.0 C1048.0 1013.5 1055.5 1022.8 1063.0 1022.0 C1070.5 1021.2 1081.8 1010.2 1088.0 1009.0 C1094.2 1007.8 1092.5 1013.5 1100.0 1015.0 C1107.5 1016.5 1105.2 1016.8 1133.0 1018.0 C1160.8 1019.2 1240.0 1017.5 1267.0 1022.0 C1294.0 1026.5 1279.0 1034.3 1295.0 1045.0 C1311.0 1055.7 1351.7 1079.2 1363.0 1086.0" fill="none" stroke="#3a7764" stroke-width="1.35" stroke-linecap="round" stroke-linejoin="round"/>
<path d="M1039.0 957.0 C1038.3 963.5 1037.5 987.5 1035.0 996.0 C1032.5 1004.5 1030.5 1005.0 1024.0 1008.0 C1017.5 1011.0 1003.2 1011.5 996.0 1014.0 C988.8 1016.5 986.2 1018.5 981.0 1023.0 C975.8 1027.5 977.3 1030.5 965.0 1041.0 C952.7 1051.5 916.7 1078.5 907.0 1086.0" fill="none" stroke="#3a7764" stroke-width="1.35" stroke-linecap="round" stroke-linejoin="round"/>
<path d="M1299.0 696.0 C1299.8 698.8 1301.8 707.5 1304.0 713.0 C1306.2 718.5 1310.3 715.7 1312.0 729.0 C1313.7 742.3 1312.2 778.7 1314.0 793.0 C1315.8 807.3 1314.8 803.8 1323.0 815.0 C1331.2 826.2 1353.5 847.5 1363.0 860.0 C1372.5 872.5 1372.5 879.0 1380.0 890.0 C1387.5 901.0 1399.5 908.7 1408.0 926.0 C1416.5 943.3 1423.5 976.2 1431.0 994.0 C1438.5 1011.8 1447.2 1020.3 1453.0 1033.0 C1458.8 1045.7 1465.2 1042.2 1466.0 1070.0 C1466.8 1097.8 1459.3 1178.3 1458.0 1200.0" fill="none" stroke="#3a7764" stroke-width="1.5" stroke-linecap="round" stroke-linejoin="round"/>
<path d="M1468.0 1074.0 C1470.0 1083.5 1477.7 1110.0 1480.0 1131.0 C1482.3 1152.0 1481.7 1188.5 1482.0 1200.0" fill="none" stroke="#3a7764" stroke-width="1.3" stroke-linecap="round" stroke-linejoin="round"/>
<path d="M903.0 563.0 C906.7 561.2 914.7 559.8 925.0 552.0 C935.3 544.2 952.3 524.8 965.0 516.0 C977.7 507.2 986.7 507.3 1001.0 499.0 C1015.3 490.7 1029.0 475.8 1051.0 466.0 C1073.0 456.2 1113.5 445.3 1133.0 440.0 C1152.5 434.7 1158.5 434.0 1168.0 434.0 C1177.5 434.0 1182.8 437.0 1190.0 440.0 C1197.2 443.0 1205.5 447.7 1211.0 452.0 C1216.5 456.3 1219.7 460.8 1223.0 466.0 C1226.3 471.2 1229.3 471.5 1231.0 483.0 C1232.7 494.5 1231.0 520.8 1233.0 535.0 C1235.0 549.2 1239.0 561.7 1243.0 568.0 C1247.0 574.3 1249.5 571.3 1257.0 573.0 C1264.5 574.7 1277.0 575.2 1288.0 578.0 C1299.0 580.8 1310.5 584.8 1323.0 590.0 C1335.5 595.2 1342.8 591.3 1363.0 609.0 C1383.2 626.7 1426.2 674.3 1444.0 696.0 C1461.8 717.7 1461.0 724.0 1470.0 739.0 C1479.0 754.0 1488.5 771.0 1498.0 786.0 C1507.5 801.0 1515.8 816.2 1527.0 829.0 C1538.2 841.8 1552.3 854.7 1565.0 863.0 C1577.7 871.3 1591.3 875.0 1603.0 879.0 C1614.7 883.0 1621.8 884.2 1635.0 887.0 C1648.2 889.8 1669.0 892.2 1682.0 896.0 C1695.0 899.8 1702.5 902.8 1713.0 910.0 C1723.5 917.2 1734.5 927.7 1745.0 939.0 C1755.5 950.3 1762.8 964.7 1776.0 978.0 C1789.2 991.3 1816.0 1012.2 1824.0 1019.0" fill="none" stroke="#3a7764" stroke-width="3.2" stroke-linecap="round"/>
<path d="M903.0 563.0 C906.7 561.2 914.7 559.8 925.0 552.0 C935.3 544.2 952.3 524.8 965.0 516.0 C977.7 507.2 986.7 507.3 1001.0 499.0 C1015.3 490.7 1029.0 475.8 1051.0 466.0 C1073.0 456.2 1113.5 445.3 1133.0 440.0 C1152.5 434.7 1158.5 434.0 1168.0 434.0 C1177.5 434.0 1182.8 437.0 1190.0 440.0 C1197.2 443.0 1205.5 447.7 1211.0 452.0 C1216.5 456.3 1219.7 460.8 1223.0 466.0 C1226.3 471.2 1229.3 471.5 1231.0 483.0 C1232.7 494.5 1231.0 520.8 1233.0 535.0 C1235.0 549.2 1239.0 561.7 1243.0 568.0 C1247.0 574.3 1249.5 571.3 1257.0 573.0 C1264.5 574.7 1277.0 575.2 1288.0 578.0 C1299.0 580.8 1310.5 584.8 1323.0 590.0 C1335.5 595.2 1342.8 591.3 1363.0 609.0 C1383.2 626.7 1426.2 674.3 1444.0 696.0 C1461.8 717.7 1461.0 724.0 1470.0 739.0 C1479.0 754.0 1488.5 771.0 1498.0 786.0 C1507.5 801.0 1515.8 816.2 1527.0 829.0 C1538.2 841.8 1552.3 854.7 1565.0 863.0 C1577.7 871.3 1591.3 875.0 1603.0 879.0 C1614.7 883.0 1621.8 884.2 1635.0 887.0 C1648.2 889.8 1669.0 892.2 1682.0 896.0 C1695.0 899.8 1702.5 902.8 1713.0 910.0 C1723.5 917.2 1734.5 927.7 1745.0 939.0 C1755.5 950.3 1762.8 964.7 1776.0 978.0 C1789.2 991.3 1816.0 1012.2 1824.0 1019.0" fill="none" stroke="#030405" stroke-width="1.2000000000000002" stroke-linecap="round"/>
<path d="M1657.0 276.0 L1693.0 315.0" fill="none" stroke="#3a7764" stroke-width="2.8" stroke-linecap="round"/>
<path d="M1657.0 276.0 L1693.0 315.0" fill="none" stroke="#030405" stroke-width="0.7999999999999998" stroke-linecap="round"/>
<path d="M1767.0 419.0 L1800.0 466.0" fill="none" stroke="#3a7764" stroke-width="2.6" stroke-linecap="round"/>
<path d="M1767.0 419.0 L1800.0 466.0" fill="none" stroke="#030405" stroke-width="0.6000000000000001" stroke-linecap="round"/>
<path d="M1155.0 236.0 C1151.3 245.0 1140.5 273.8 1133.0 290.0 C1125.5 306.2 1118.2 323.7 1110.0 333.0 C1101.8 342.3 1091.8 343.0 1084.0 346.0 C1076.2 349.0 1072.5 350.0 1063.0 351.0 C1053.5 352.0 1036.2 350.5 1027.0 352.0 C1017.8 353.5 1013.2 355.7 1008.0 360.0 C1002.8 364.3 999.7 369.8 996.0 378.0 C992.3 386.2 990.0 397.3 986.0 409.0 C982.0 420.7 976.0 438.5 972.0 448.0 C968.0 457.5 967.7 458.3 962.0 466.0 C956.3 473.7 946.2 485.7 938.0 494.0 C929.8 502.3 918.3 509.2 913.0 516.0 C907.7 522.8 907.7 530.7 906.0 535.0 C904.3 539.3 903.5 540.8 903.0 542.0" fill="none" stroke="#58a98b" stroke-width="3.8" stroke-linecap="round" stroke-linejoin="round"/>
<path d="M1600.0 236.0 C1600.8 239.5 1602.5 251.2 1605.0 257.0 C1607.5 262.8 1610.2 267.0 1615.0 271.0 C1619.8 275.0 1627.7 280.2 1634.0 281.0 C1640.3 281.8 1646.7 277.7 1653.0 276.0 C1659.3 274.3 1661.8 270.2 1672.0 271.0 C1682.2 271.8 1704.5 277.8 1714.0 281.0 C1723.5 284.2 1723.3 284.5 1729.0 290.0 C1734.7 295.5 1741.7 307.5 1748.0 314.0 C1754.3 320.5 1761.2 325.8 1767.0 329.0 C1772.8 332.2 1773.5 331.5 1783.0 333.0 C1792.5 334.5 1817.2 337.2 1824.0 338.0" fill="none" stroke="#58a98b" stroke-width="3.8" stroke-linecap="round" stroke-linejoin="round"/>
<path d="M903.0 917.0 C922.2 924.3 994.3 952.7 1018.0 961.0 C1041.7 969.3 1037.8 965.7 1045.0 967.0 C1052.2 968.3 1051.8 969.7 1061.0 969.0 C1070.2 968.3 1085.8 965.0 1100.0 963.0 C1114.2 961.0 1134.5 957.7 1146.0 957.0 C1157.5 956.3 1155.7 956.3 1169.0 959.0 C1182.3 961.7 1204.7 967.5 1226.0 973.0 C1247.3 978.5 1274.2 986.5 1297.0 992.0 C1319.8 997.5 1345.2 1002.8 1363.0 1006.0 C1380.8 1009.2 1387.5 1011.7 1404.0 1011.0 C1420.5 1010.3 1449.7 1003.0 1462.0 1002.0 C1474.3 1001.0 1467.2 1000.5 1478.0 1005.0 C1488.8 1009.5 1512.2 1023.0 1527.0 1029.0 C1541.8 1035.0 1549.0 1036.8 1567.0 1041.0 C1585.0 1045.2 1612.2 1048.5 1635.0 1054.0 C1657.8 1059.5 1688.7 1069.3 1704.0 1074.0 C1719.3 1078.7 1720.3 1078.0 1727.0 1082.0 C1733.7 1086.0 1738.3 1090.5 1744.0 1098.0 C1749.7 1105.5 1754.8 1118.7 1761.0 1127.0 C1767.2 1135.3 1770.5 1141.3 1781.0 1148.0 C1791.5 1154.7 1816.8 1163.8 1824.0 1167.0" fill="none" stroke="#58a98b" stroke-width="4.0" stroke-linecap="round" stroke-linejoin="round"/>
<path d="M1709.0 1054.0 L1682.0 1149.0" fill="none" stroke="#58a98b" stroke-width="3.2" stroke-linecap="round" stroke-linejoin="round"/>
<rect x="1557" y="1070" width="4" height="130" fill="#1c3a32"/>
<rect x="1632" y="1110" width="4" height="90" fill="#1c3a32"/>
<rect x="1741" y="1165" width="4" height="35" fill="#1c3a32"/>
<line x1="1566.5" y1="1075" x2="1566.5" y2="1200" stroke="#1f3d35" stroke-width="1"/>
<line x1="1622.3" y1="1075" x2="1622.3" y2="1200" stroke="#1f3d35" stroke-width="1"/>
<line x1="1645.3" y1="1075" x2="1645.3" y2="1200" stroke="#1f3d35" stroke-width="1"/>
<text x="0" y="0" font-family="Liberation Sans" font-size="11.5" fill="#6aa794" text-anchor="middle" transform="translate(1224 284.5) scale(0.76 1)">Whatson</text>
<text x="0" y="0" font-family="Liberation Sans" font-size="11.5" fill="#6aa794" text-anchor="middle" transform="translate(1224 294.5) scale(0.76 1)">Gravel</text>
<text x="0" y="0" font-family="Liberation Sans" font-size="11.5" fill="#6aa794" text-anchor="middle" transform="translate(1298 271.5) scale(0.76 1)">Gieringer</text>
<text x="0" y="0" font-family="Liberation Sans" font-size="11.5" fill="#6aa794" text-anchor="middle" transform="translate(1362 294.5) scale(0.76 1)">Grandview</text>
<text x="0" y="0" font-family="Liberation Sans" font-size="11.5" fill="#6aa794" text-anchor="middle" transform="translate(1380 340.5) scale(0.76 1)">Mitchell Memorial</text>
<text x="0" y="0" font-family="Liberation Sans" font-size="11.5" fill="#6aa794" text-anchor="middle" transform="translate(1380 350.5) scale(0.76 1)">Forest</text>
<text x="0" y="0" font-family="Liberation Sans" font-size="11.5" fill="#6aa794" text-anchor="middle" transform="translate(1189 396.5) scale(0.76 1)">Hooven</text>
<text x="0" y="0" font-family="Liberation Sans" font-size="11.5" fill="#6aa794" text-anchor="middle" transform="translate(1380 481.5) scale(0.76 1)">Miami Heights</text>
<text x="0" y="0" font-family="Liberation Sans" font-size="11.5" fill="#6aa794" text-anchor="middle" transform="translate(1238 496.5) scale(0.76 1)">Cleves</text>
<text x="0" y="0" font-family="Liberation Sans" font-size="11.5" fill="#6aa794" text-anchor="middle" transform="translate(1291 535.5) scale(0.76 1)">Aston Oaks Golf Club</text>
<text x="0" y="0" font-family="Liberation Sans" font-size="11.5" fill="#6aa794" text-anchor="middle" transform="translate(1244 557.5) scale(0.76 1)">North Bend</text>
<text x="0" y="0" font-family="Liberation Sans" font-size="11.5" fill="#6aa794" text-anchor="middle" transform="translate(966 519.5) scale(0.76 1)">Elizabethtown</text>
<text x="0" y="0" font-family="Liberation Sans" font-size="11.5" fill="#6aa794" text-anchor="middle" transform="translate(1366 622.5) scale(0.76 1)">Sekitan</text>
<text x="0" y="0" font-family="Liberation Sans" font-size="11.5" fill="#6aa794" text-anchor="middle" transform="translate(1434 657.5) scale(0.76 1)">Addyston</text>
<text x="0" y="0" font-family="Liberation Sans" font-size="11.5" fill="#6aa794" text-anchor="middle" transform="translate(1468 728.5) scale(0.76 1)">Fernbank</text>
<text x="0" y="0" font-family="Liberation Sans" font-size="11.5" fill="#6aa794" text-anchor="middle" transform="translate(1533 810.5) scale(0.76 1)">Sayler Park</text>
<text x="0" y="0" font-family="Liberation Sans" font-size="11.5" fill="#6aa794" text-anchor="middle" transform="translate(1360 858.5) scale(0.76 1)">Francisville</text>
<text x="0" y="0" font-family="Liberation Sans" font-size="11.5" fill="#6aa794" text-anchor="middle" transform="translate(1663 793.5) scale(0.76 1)">Mountview</text>
<text x="0" y="0" font-family="Liberation Sans" font-size="11.5" fill="#6aa794" text-anchor="middle" transform="translate(1774 846.5) scale(0.76 1)">Cotillion Village</text>
<text x="0" y="0" font-family="Liberation Sans" font-size="11.5" fill="#6aa794" text-anchor="middle" transform="translate(1569 554.5) scale(0.76 1)">Bridgetown</text>
<text x="0" y="0" font-family="Liberation Sans" font-size="11.5" fill="#6aa794" text-anchor="middle" transform="translate(1396 964.5) scale(0.76 1)">Park</text>
<text x="0" y="0" font-family="Liberation Sans" font-size="11.5" fill="#6aa794" text-anchor="middle" transform="translate(1396 974.5) scale(0.76 1)">West</text>
<text x="0" y="0" font-family="Liberation Sans" font-size="11.5" fill="#6aa794" text-anchor="middle" transform="translate(1396 985.5) scale(0.76 1)">International</text>
<text x="0" y="0" font-family="Liberation Sans" font-size="11.5" fill="#6aa794" text-anchor="middle" transform="translate(1745 1009.5) scale(0.76 1)">Stringtown</text>
<text x="0" y="0" font-family="Liberation Sans" font-size="11.5" fill="#6aa794" text-anchor="middle" transform="translate(1787 1055.5) scale(0.76 1)">Constance</text>
<text x="0" y="0" font-family="Liberation Sans" font-size="11.5" fill="#6aa794" text-anchor="middle" transform="translate(1014 1032.5) scale(0.76 1)">Idlewild</text>
<text x="0" y="0" font-family="Liberation Sans" font-size="11.5" fill="#6aa794" text-anchor="middle" transform="translate(1203 1024.5) scale(0.76 1)">Petersburg Rd</text>
<text x="0" y="0" font-family="Liberation Sans" font-size="11.5" fill="#6aa794" text-anchor="middle" transform="translate(1290 1047.5) scale(0.76 1)">Bullittsville</text>
<text x="0" y="0" font-family="Liberation Sans" font-size="11.5" fill="#6aa794" text-anchor="middle" transform="translate(1475 1106.5) scale(0.76 1)">Hebron</text>
<text x="0" y="0" font-family="Liberation Sans" font-size="11.5" fill="#6aa794" text-anchor="middle" transform="translate(1689 1200.5) scale(0.76 1)">Cincinnati/</text>
<text x="0" y="0" font-family="Liberation Sans" font-size="11.5" fill="#6aa794" text-anchor="middle" transform="translate(1507 891.5) scale(0.76 1)">Taylorsp</text>
<text x="0" y="0" font-family="Liberation Sans" font-size="11.5" fill="#6aa794" text-anchor="middle" transform="translate(1681 962.5) scale(0.76 1)">River Rd</text>
<text x="0" y="0" font-family="Liberation Sans" font-size="11.5" fill="#6aa794" text-anchor="middle" transform="translate(1162 508) rotate(15) scale(0.76 1)">Miamiview Rd</text>
<text x="0" y="0" font-family="Liberation Sans" font-size="11.5" fill="#6aa794" text-anchor="middle" transform="translate(1105 340) rotate(80) scale(0.76 1)">Kilby Rd</text>
<text x="0" y="0" font-family="Liberation Sans" font-size="11.5" fill="#6aa794" text-anchor="middle" transform="translate(1451 277) rotate(-22) scale(0.76 1)">Buffalo Ridge Rd</text>
<text x="0" y="0" font-family="Liberation Sans" font-size="11.5" fill="#6aa794" text-anchor="middle" transform="translate(1567 272) rotate(72) scale(0.76 1)">Nesselman Rd</text>
<text x="0" y="0" font-family="Liberation Sans" font-size="11.5" fill="#6aa794" text-anchor="middle" transform="translate(1685 296) rotate(55) scale(0.76 1)">Harrison Av</text>
<text x="0" y="0" font-family="Liberation Sans" font-size="11.5" fill="#6aa794" text-anchor="middle" transform="translate(1112 660) rotate(-55) scale(0.76 1)">Cliff Rd</text>
<text x="0" y="0" font-family="Liberation Sans" font-size="11.5" fill="#6aa794" text-anchor="middle" transform="translate(964 776) rotate(-18) scale(0.76 1)">Brower Rd</text>
<text x="0" y="0" font-family="Liberation Sans" font-size="11.5" fill="#6aa794" text-anchor="middle" transform="translate(1314 760) rotate(88) scale(0.76 1)">N Bend Rd</text>
<text x="0" y="0" font-family="Liberation Sans" font-size="11.5" fill="#6aa794" text-anchor="middle" transform="translate(1548 736) rotate(10) scale(0.76 1)">Cleves Warsaw Pike</text>
<text x="0" y="0" font-family="Liberation Sans" font-size="11.5" fill="#6aa794" text-anchor="middle" transform="translate(1578 650) rotate(-22) scale(0.76 1)">South Rd</text>
<text x="0" y="0" font-family="Liberation Sans" font-size="11.5" fill="#6aa794" text-anchor="middle" transform="translate(1472 886) rotate(-62) scale(0.76 1)">Tanner Rd</text>
<text x="0" y="0" font-family="Liberation Sans" font-size="11.5" fill="#6aa794" text-anchor="middle" transform="translate(1551 860) rotate(35) scale(0.76 1)">River Rd</text>
<text x="0" y="0" font-family="Liberation Sans" font-size="11.5" fill="#6aa794" text-anchor="middle" transform="translate(1716 720) rotate(-88) scale(0.76 1)">Ebenezer Rd</text>
<text x="0" y="0" font-family="Liberation Sans" font-size="11.5" fill="#6aa794" text-anchor="middle" transform="translate(1635 818) rotate(-12) scale(0.76 1)">Rapid Run Rd</text>
<text x="0" y="0" font-family="Liberation Sans" font-size="11.5" fill="#6aa794" text-anchor="middle" transform="translate(1800 780) rotate(-85) scale(0.76 1)">Neeb Rd</text>
<text x="0" y="0" font-family="Liberation Sans" font-size="11.5" fill="#6aa794" text-anchor="middle" transform="translate(1745 884) rotate(35) scale(0.76 1)">Bender Rd</text>
<text x="0" y="0" font-family="Liberation Sans" font-size="11.5" fill="#6aa794" text-anchor="middle" transform="translate(1649 1037) rotate(-18) scale(0.76 1)">Petersburg Rd</text>
<text x="0" y="0" font-family="Liberation Sans" font-size="11.5" fill="#6aa794" text-anchor="middle" transform="translate(1468 1040) rotate(70) scale(0.76 1)">N Bend Rd</text>
<rect x="907" y="240.5" width="369" height="30.5" fill="#c9c9c7" fill-opacity="0.92"/>
<rect x="907" y="267.5" width="369" height="3.5" fill="#e6e6e4"/>
<path d="M1098 271 Q1108 252 1120 240.5" stroke="#d8f0e4" stroke-width="5" fill="none" opacity="0.75"/><path d="M935 271 Q940 250 950 240.5" stroke="#e6efea" stroke-width="2" fill="none" opacity="0.35"/><path d="M1010 271 Q1015 255 1030 240.5" stroke="#e6efea" stroke-width="2.5" fill="none" opacity="0.3"/>
<circle cx="1355.5" cy="251.5" r="15.5" fill="#3b3d3c" fill-opacity="0.75"/>
<path d="M1347 245 L1352 243 L1358 245 L1364 243 V258 L1358 260 L1352 258 L1347 260Z" fill="#7a7c7b"/>
<circle cx="1389" cy="252.4" r="16.4" fill="#e5e5e5"/>
<circle cx="1389" cy="252.4" r="8.6" fill="#1f1f1f"/>
<rect x="1388" y="251" width="2" height="5.5" fill="#eee"/><circle cx="1389" cy="248.3" r="1.2" fill="#eee"/>
<rect x="1755" y="243.2" width="33.4" height="34.5" rx="2" fill="#fafafd" stroke="#d8d8e0" stroke-width="0.8"/>
<rect x="1795.6" y="243.2" width="34" height="34.5" rx="2" fill="#fafafd" stroke="#d8d8e0" stroke-width="0.8"/>
<path d="M1771.7 253 L1778.2 256.8 L1771.7 260.6 L1765.2 256.8Z" fill="#55535f"/><path d="M1765.2 260 L1771.7 263.8 L1778.2 260 L1778.2 261.2 L1771.7 265 L1765.2 261.2Z" fill="#55535f"/><path d="M1765.2 263.4 L1771.7 267.2 L1778.2 263.4 L1778.2 264.6 L1771.7 268.4 L1765.2 264.6Z" fill="#55535f"/>
<path d="M1812.3 269.5 Q1806 261.5 1806 257.5 A6.3 6.3 0 0 1 1818.6 257.5 Q1818.6 261.5 1812.3 269.5Z" fill="#55535f"/><circle cx="1812.3" cy="257.5" r="2.2" fill="#fafafd"/>
<clipPath id="tugclip"><rect x="1431.5" y="319.4" width="333" height="266.6"/></clipPath>
<g clip-path="url(#tugclip)">
<rect x="1431" y="319" width="334" height="267" fill="#312e29"/>
<path d="M1431.0 319.0 L1690.0 319.0 L1623.0 391.0 L1591.0 438.0 L1540.0 485.0 L1501.0 515.0 L1433.0 558.0 L1431.0 560.0Z" fill="#3b2e2c" filter="url(#blur2)"/>
<clipPath id="landclip"><path d="M1431.0 319.0 L1690.0 319.0 L1623.0 391.0 L1591.0 438.0 L1540.0 485.0 L1501.0 515.0 L1433.0 558.0 L1431.0 560.0Z"/></clipPath>
<rect x="1431" y="319" width="334" height="267" filter="url(#noise2)" opacity="0.4" clip-path="url(#landclip)"/>
<rect x="1431" y="319" width="334" height="267" filter="url(#noise)" opacity="0.25"/>
<path d="M1431.0 361.0 L1484.0 338.0 L1527.0 323.0 L1557.0 319.0" stroke="#8f8985" stroke-width="2" fill="none" opacity="0.8"/>
<path d="M1431 319 L1530 319 L1431 352Z" fill="#5a5350" opacity="0.45"/>
<path d="M1561.0 319.0 L1585.0 370.0 L1612.0 421.0 L1617.0 432.0" stroke="#1f1a18" stroke-width="2" fill="none" opacity="0.5"/>
<g transform="translate(1595 468) rotate(-43)"><rect x="-33" y="-11.5" width="66" height="23" fill="#95918c"/><rect x="-33" y="-11.5" width="58" height="12" fill="#8a3a34"/><line x1="-33" y1="0.5" x2="25" y2="0.5" stroke="#5a4a48" stroke-width="0.8"/><rect x="-33" y="-11.5" width="66" height="23" fill="none" stroke="#6f6a66" stroke-width="0.8"/></g>
<g transform="translate(1633 441) rotate(-43)"><rect x="-9" y="-4" width="18" height="8" rx="2" fill="#262220"/><rect x="-8" y="-2" width="6" height="5" fill="#c8c8c4"/></g>
<circle cx="1606" cy="433" r="1.6" fill="#ddd"/>
</g>
<rect x="1430" y="317.9" width="336" height="269.6" fill="none" stroke="#f5b800" stroke-width="3"/>
<text x="1596" y="552.6" font-family="Liberation Sans" font-weight="700" font-size="22" fill="#f5c000" text-anchor="middle">Tug</text>
<rect x="999.3" y="522.7" width="195.7" height="31.2" fill="#000" fill-opacity="0.85" stroke="#f5b800" stroke-width="3"/>
<text x="1097" y="544" font-family="Liberation Sans" font-weight="700" font-size="18.2" fill="#f5b800" text-anchor="middle">Live Vessel Track</text>
<path d="M1098 564 V621.5 H1156 V678" fill="none" stroke="#f5b800" stroke-width="4"/>
<circle cx="1054.7" cy="779" r="38.5" fill="url(#glowO)"/>
<circle cx="1233" cy="600.6" r="36" fill="url(#glowY)"/>
<circle cx="1370" cy="654" r="30" fill="url(#glowY)"/>
<circle cx="1530" cy="893" r="30" fill="url(#glowY)"/>
<path d="M1054.7 779.0 L1232.0 602.3 L1259.0 603.0 L1338.0 630.0 L1360.0 650.0 L1401.0 696.0 L1492.0 820.0 L1518.0 863.0 L1537.0 894.0 L1540.6 897.7 L1593.0 909.8 L1638.0 915.6 L1691.0 933.8 L1706.8 945.4 L1706.0 962.0" fill="none" stroke="#34d12c" stroke-width="2.6" stroke-linejoin="round" stroke-linecap="round"/>
<path d="M1235.0 599.7 L1255.4 598.5 L1345.0 629.0 L1366.0 652.0 L1404.0 696.0 L1494.0 816.7 L1528.5 859.8 L1556.0 896.0 L1593.0 906.0 L1647.0 918.0 L1691.0 942.8 L1706.0 962.0" fill="none" stroke="#34d12c" stroke-width="2.6" stroke-linejoin="round" stroke-linecap="round"/>
<path d="M1533.7 896.9 L1540.6 897.7" fill="none" stroke="#34d12c" stroke-width="2" stroke-linejoin="round" stroke-linecap="round"/>
<circle cx="1054.7" cy="779" r="13.6" fill="#000" stroke="#e8e0e8" stroke-width="1.5"/>
<path d="M1046 779.5 H1063 M1054.5 772 V786 M1050 785 H1059" stroke="#34d12c" stroke-width="2.2" fill="none"/>
<circle cx="1233" cy="600.6" r="13.2" fill="#000" stroke="#e8e0e8" stroke-width="1.3"/>
<circle cx="1370.5" cy="654.5" r="6.5" fill="#d8d6dc"/>
<circle cx="1530.5" cy="892" r="6" fill="#d8d6dc"/>
<path d="M1230.0 603.0 L1259.0 603.0" fill="none" stroke="#34d12c" stroke-width="2.4" stroke-linejoin="round" stroke-linecap="round"/>
<path d="M1054.7 779.0 L1066.0 767.5" fill="none" stroke="#34d12c" stroke-width="2.4" stroke-linejoin="round" stroke-linecap="round"/>
<path d="M1235.0 599.7 L1255.4 598.5" fill="none" stroke="#34d12c" stroke-width="2.4" stroke-linejoin="round" stroke-linecap="round"/>
<path d="M1533.7 896.9 L1540.6 897.7 L1556.0 896.0" fill="none" stroke="#34d12c" stroke-width="2.2" stroke-linejoin="round" stroke-linecap="round"/>
<path d="M1366.0 652.0 L1376.0 662.0" fill="none" stroke="#34d12c" stroke-width="2.2" stroke-linejoin="round" stroke-linecap="round"/>
<path d="M1233 600.5 Q1230 590 1224.5 582 A10.8 10.8 0 1 1 1241.5 582 Q1236 590 1233 600.5Z" fill="#e8453c"/>
<circle cx="1233" cy="576" r="3.4" fill="#8e1b16"/>
</svg></div>
<svg class="a" style="left:-164px;top:-140px;pointer-events:none" width="2000" height="300" viewBox="0 0 2000 300"><rect x="816.3" y="200.9" width="2.4" height="1.3" rx="0.6" fill="#d8d8de" opacity="0.36" transform="rotate(-35 816.3 200.9)"/><rect x="1299.0" y="179.9" width="1.5" height="1.3" rx="0.6" fill="#d8d8de" opacity="0.44" transform="rotate(-35 1299.0 179.9)"/><rect x="842.9" y="187.3" width="4.0" height="1.3" rx="0.6" fill="#d8d8de" opacity="0.31" transform="rotate(-35 842.9 187.3)"/><rect x="1561.4" y="198.0" width="3.1" height="1.3" rx="0.6" fill="#d8d8de" opacity="0.20" transform="rotate(-35 1561.4 198.0)"/><rect x="1310.4" y="215.2" width="2.8" height="1.3" rx="0.6" fill="#d8d8de" opacity="0.41" transform="rotate(-35 1310.4 215.2)"/><rect x="1355.9" y="179.8" width="3.4" height="1.3" rx="0.6" fill="#d8d8de" opacity="0.36" transform="rotate(-35 1355.9 179.8)"/><rect x="895.1" y="178.4" width="3.7" height="1.3" rx="0.6" fill="#d8d8de" opacity="0.32" transform="rotate(-35 895.1 178.4)"/><rect x="1414.9" y="215.7" width="3.3" height="1.3" rx="0.6" fill="#d8d8de" opacity="0.47" transform="rotate(-35 1414.9 215.7)"/><rect x="1011.7" y="212.2" width="2.6" height="1.3" rx="0.6" fill="#d8d8de" opacity="0.48" transform="rotate(-35 1011.7 212.2)"/><rect x="1614.2" y="181.3" width="1.8" height="1.3" rx="0.6" fill="#d8d8de" opacity="0.23" transform="rotate(-35 1614.2 181.3)"/><rect x="1722.0" y="196.2" width="3.1" height="1.3" rx="0.6" fill="#d8d8de" opacity="0.26" transform="rotate(-35 1722.0 196.2)"/><rect x="1151.5" y="194.0" width="2.4" height="1.3" rx="0.6" fill="#d8d8de" opacity="0.35" transform="rotate(-35 1151.5 194.0)"/><rect x="1247.4" y="216.8" width="3.2" height="1.3" rx="0.6" fill="#d8d8de" opacity="0.48" transform="rotate(-35 1247.4 216.8)"/><rect x="1586.2" y="220.6" width="3.2" height="1.3" rx="0.6" fill="#d8d8de" opacity="0.21" transform="rotate(-35 1586.2 220.6)"/><rect x="1591.5" y="219.4" width="3.8" height="1.3" rx="0.6" fill="#d8d8de" opacity="0.35" transform="rotate(-35 1591.5 219.4)"/><rect x="1408.7" y="186.3" width="3.6" height="1.3" rx="0.6" fill="#d8d8de" opacity="0.35" transform="rotate(-35 1408.7 186.3)"/><rect x="874.8" y="179.8" width="3.6" height="1.3" rx="0.6" fill="#d8d8de" opacity="0.50" transform="rotate(-35 874.8 179.8)"/><rect x="630.2" y="212.2" width="2.5" height="1.3" rx="0.6" fill="#d8d8de" opacity="0.20" transform="rotate(-35 630.2 212.2)"/><rect x="885.9" y="210.8" width="3.7" height="1.3" rx="0.6" fill="#d8d8de" opacity="0.17" transform="rotate(-35 885.9 210.8)"/><rect x="1285.1" y="179.0" width="3.3" height="1.3" rx="0.6" fill="#d8d8de" opacity="0.27" transform="rotate(-35 1285.1 179.0)"/><rect x="1616.7" y="220.1" width="2.8" height="1.3" rx="0.6" fill="#d8d8de" opacity="0.50" transform="rotate(-35 1616.7 220.1)"/><rect x="905.5" y="180.4" width="3.0" height="1.3" rx="0.6" fill="#d8d8de" opacity="0.16" transform="rotate(-35 905.5 180.4)"/><rect x="765.7" y="194.9" width="3.0" height="1.3" rx="0.6" fill="#d8d8de" opacity="0.20" transform="rotate(-35 765.7 194.9)"/><rect x="572.8" y="215.2" width="2.3" height="1.3" rx="0.6" fill="#d8d8de" opacity="0.49" transform="rotate(-35 572.8 215.2)"/><rect x="1636.3" y="193.6" width="2.7" height="1.3" rx="0.6" fill="#d8d8de" opacity="0.33" transform="rotate(-35 1636.3 193.6)"/><rect x="1321.6" y="203.2" width="2.9" height="1.3" rx="0.6" fill="#d8d8de" opacity="0.37" transform="rotate(-35 1321.6 203.2)"/><rect x="1691.1" y="199.3" width="2.6" height="1.3" rx="0.6" fill="#d8d8de" opacity="0.40" transform="rotate(-35 1691.1 199.3)"/><rect x="815.9" y="190.2" width="3.9" height="1.3" rx="0.6" fill="#d8d8de" opacity="0.33" transform="rotate(-35 815.9 190.2)"/><rect x="1202.8" y="177.5" width="2.5" height="1.3" rx="0.6" fill="#d8d8de" opacity="0.35" transform="rotate(-35 1202.8 177.5)"/><rect x="545.0" y="204.1" width="3.1" height="1.3" rx="0.6" fill="#d8d8de" opacity="0.17" transform="rotate(-35 545.0 204.1)"/><rect x="1301.0" y="197.5" width="3.2" height="1.3" rx="0.6" fill="#d8d8de" opacity="0.27" transform="rotate(-35 1301.0 197.5)"/><rect x="1400.2" y="209.5" width="1.6" height="1.3" rx="0.6" fill="#d8d8de" opacity="0.17" transform="rotate(-35 1400.2 209.5)"/><rect x="1361.6" y="219.4" width="2.1" height="1.3" rx="0.6" fill="#d8d8de" opacity="0.31" transform="rotate(-35 1361.6 219.4)"/><rect x="1257.9" y="191.1" width="2.4" height="1.3" rx="0.6" fill="#d8d8de" opacity="0.26" transform="rotate(-35 1257.9 191.1)"/><rect x="979.6" y="203.2" width="2.3" height="1.3" rx="0.6" fill="#d8d8de" opacity="0.28" transform="rotate(-35 979.6 203.2)"/><rect x="1481.5" y="178.2" width="2.9" height="1.3" rx="0.6" fill="#d8d8de" opacity="0.41" transform="rotate(-35 1481.5 178.2)"/><rect x="906.0" y="186.8" width="3.5" height="1.3" rx="0.6" fill="#d8d8de" opacity="0.23" transform="rotate(-35 906.0 186.8)"/><rect x="753.3" y="196.2" width="3.2" height="1.3" rx="0.6" fill="#d8d8de" opacity="0.19" transform="rotate(-35 753.3 196.2)"/><rect x="920.8" y="191.7" width="3.6" height="1.3" rx="0.6" fill="#d8d8de" opacity="0.30" transform="rotate(-35 920.8 191.7)"/><rect x="1585.1" y="184.4" width="2.3" height="1.3" rx="0.6" fill="#d8d8de" opacity="0.38" transform="rotate(-35 1585.1 184.4)"/><circle cx="1629.6" cy="229.5" r="0.9" fill="#c8c8e0" opacity="0.29"/><circle cx="366.0" cy="230.3" r="0.9" fill="#c8c8e0" opacity="0.28"/><circle cx="1500.4" cy="233.4" r="0.9" fill="#c8c8e0" opacity="0.27"/><circle cx="626.8" cy="233.1" r="0.9" fill="#c8c8e0" opacity="0.46"/><circle cx="1499.6" cy="228.5" r="0.9" fill="#c8c8e0" opacity="0.25"/><circle cx="648.9" cy="232.9" r="0.9" fill="#c8c8e0" opacity="0.31"/><circle cx="738.9" cy="229.2" r="0.9" fill="#c8c8e0" opacity="0.37"/><circle cx="843.3" cy="234.2" r="0.9" fill="#c8c8e0" opacity="0.26"/><circle cx="173.7" cy="234.4" r="0.9" fill="#c8c8e0" opacity="0.55"/><circle cx="1798.4" cy="229.3" r="0.9" fill="#c8c8e0" opacity="0.58"/><circle cx="1699.9" cy="227.2" r="0.9" fill="#c8c8e0" opacity="0.50"/><circle cx="1549.9" cy="231.6" r="0.9" fill="#c8c8e0" opacity="0.41"/><circle cx="644.1" cy="228.4" r="0.9" fill="#c8c8e0" opacity="0.29"/><circle cx="278.6" cy="230.9" r="0.9" fill="#c8c8e0" opacity="0.31"/><circle cx="1506.1" cy="225.5" r="0.9" fill="#c8c8e0" opacity="0.56"/><circle cx="1313.4" cy="234.2" r="0.9" fill="#c8c8e0" opacity="0.56"/><circle cx="1654.1" cy="230.8" r="0.9" fill="#c8c8e0" opacity="0.21"/><circle cx="1398.7" cy="226.7" r="0.9" fill="#c8c8e0" opacity="0.32"/><circle cx="1262.4" cy="230.2" r="0.9" fill="#c8c8e0" opacity="0.37"/><circle cx="1719.2" cy="231.1" r="0.9" fill="#c8c8e0" opacity="0.34"/><circle cx="583.6" cy="233.6" r="0.9" fill="#c8c8e0" opacity="0.39"/><circle cx="1460.0" cy="228.5" r="0.9" fill="#c8c8e0" opacity="0.28"/><circle cx="1050.3" cy="233.2" r="0.9" fill="#c8c8e0" opacity="0.27"/><circle cx="1475.4" cy="234.2" r="0.9" fill="#c8c8e0" opacity="0.52"/><circle cx="1528.1" cy="225.1" r="0.9" fill="#c8c8e0" opacity="0.45"/></svg>
<div class="t" style="left:11.20px;top:8.11px;font-size:14.4px;line-height:14.4px;color:#e4e4e4;font-weight:400;letter-spacing:1.2px;transform:scaleX(1.14);transform-origin:0 0">BLACK</div>
<div class="t" style="left:75.80px;top:8.11px;font-size:14.4px;line-height:14.4px;color:#e4e4e4;font-weight:400;letter-spacing:1.2px;transform:scaleX(1.14);transform-origin:0 0">SKY</div>
<svg class="a" style="left:71px;top:3px" width="6" height="24" viewBox="0 0 6 24"><path d="M4.2 1 Q1.6 12 4.2 23" stroke="#b08a2a" stroke-width="1.2" fill="none"/></svg>
<svg class="a" style="left:31px;top:51px" width="20" height="17" viewBox="0 0 20 17"><rect x="1" y="1.6" width="15" height="2" fill="#e8e8e8"/><rect x="1" y="5.8" width="15" height="2" fill="#e8e8e8"/><rect x="1" y="10" width="10" height="2" fill="#e8e8e8"/><path d="M12.5 8.8 L18.5 12 L12.5 15.2Z" fill="#e8e8e8"/></svg>
<div class="a" style="left:57.5px;top:44px;width:163.5px;height:29px;border:2px solid #6fdc74"></div>
<div class="t" style="left:63.50px;top:50.30px;font-size:17.6px;line-height:17.6px;color:#f2f2f2;font-weight:400;letter-spacing:0px;-webkit-text-stroke:0.3px currentColor">Tug Status Reports</div>
<div class="a" style="left:236px;top:56px;width:4px;height:4px;border-radius:50%;background:#eee"></div>
<svg class="a" style="left:256px;top:50px" width="15" height="19" viewBox="0 0 15 19"><path d="M2 1 H9.5 L14 5.5 V16.5 Q14 18 12.5 18 H2 Q0.5 18 0.5 16.5 V2.5 Q0.5 1 2 1Z" fill="#e6e6e6"/><path d="M9 1.5 V6 H13.5Z" fill="#5d5d5f"/><rect x="3.5" y="9.5" width="7" height="1.5" fill="#5d5d5f"/><rect x="3.5" y="13" width="7" height="1.5" fill="#5d5d5f"/></svg>
<svg class="a" style="left:289px;top:51px" width="17" height="17" viewBox="0 0 17 17"><circle cx="8.5" cy="5" r="3.6" fill="#e6e6e6"/><path d="M1.5 15.5 Q1.5 10.5 8.5 10.5 Q15.5 10.5 15.5 15.5Z" fill="#e6e6e6"/></svg>
<svg class="a" style="left:323px;top:50px" width="18" height="18" viewBox="0 0 18 18"><path d="M9 1.8 L11 7 L16.6 7.3 L12.3 10.8 L13.8 16.2 L9 13.1 L4.2 16.2 L5.7 10.8 L1.4 7.3 L7 7Z" fill="none" stroke="#e6e6e6" stroke-width="1.4" stroke-linejoin="miter"/></svg>
<div class="a" style="left:1607px;top:46.5px;width:80px;height:24px;background:#2bbd4a;border-radius:4px"></div>
<svg class="a" style="left:1621px;top:52px" width="11" height="12" viewBox="0 0 11 12"><path d="M1 1 H8 L10 3 V11 H1Z" fill="#fff"/><rect x="2.5" y="2" width="4.5" height="2.5" fill="#2bbd4a"/><circle cx="5.5" cy="7.8" r="1.5" fill="#2bbd4a"/></svg>
<div class="t" style="left:1640.50px;top:51.57px;font-size:13.5px;line-height:13.5px;color:#fff;font-weight:700;letter-spacing:0px;">Save</div>
<div class="t" style="left:23.00px;top:123.30px;font-size:17.6px;line-height:17.6px;color:#f4f4f4;font-weight:400;letter-spacing:-0.3px;-webkit-text-stroke:0.35px currentColor">9 Events</div>
<div class="a" style="left:588.5px;top:112px;width:107px;height:39px;border:2px solid #dedede;border-radius:4px"></div>
<svg class="a" style="left:595.5px;top:121.5px" width="16" height="20" viewBox="0 0 16 20"><path d="M2.2 3.2 H13.8 Q15 3.2 15 4.4 V17.5 Q15 18.7 13.8 18.7 H2.2 Q1 18.7 1 17.5 V4.4 Q1 3.2 2.2 3.2Z" fill="none" stroke="#e8e8e8" stroke-width="1.8"/><rect x="1" y="3.2" width="14" height="4.2" fill="#e8e8e8"/><rect x="3.5" y="1.2" width="1.8" height="3" fill="#e8e8e8"/><rect x="10.7" y="1.2" width="1.8" height="3" fill="#e8e8e8"/><rect x="3.6" y="9.6" width="1.8" height="1.8" fill="#e8e8e8"/><rect x="7.1" y="9.6" width="1.8" height="1.8" fill="#e8e8e8"/><rect x="10.6" y="9.6" width="1.8" height="1.8" fill="#e8e8e8"/></svg>
<div class="t" style="left:616.00px;top:124.58px;font-size:12.9px;line-height:12.9px;color:#f2f2f2;font-weight:700;letter-spacing:-0.75px;">LAST 3 DAYS</div>
<svg class="a" style="left:718px;top:125px" width="14" height="12" viewBox="0 0 14 12"><path d="M2.3 9 L7 4.2 L11.7 9" fill="none" stroke="#eee" stroke-width="2"/></svg>
<svg class="a" style="left:21px;top:166px" width="18" height="18" viewBox="0 0 18 18"><path d="M14.2 6.2 A6.2 6.2 0 1 0 15 10.2" fill="none" stroke="#ececec" stroke-width="1.9"/><path d="M15.9 2.4 V8.2 H10.1Z" fill="#ececec"/></svg>
<svg class="a" style="left:55.5px;top:169px" width="15" height="14" viewBox="0 0 15 14"><rect x="0" y="0.6" width="14" height="1.9" fill="#ececec"/><rect x="0" y="4.1" width="14" height="1.9" fill="#ececec"/><rect x="0" y="7.6" width="14" height="1.9" fill="#ececec"/><rect x="0" y="11.1" width="14" height="1.9" fill="#ececec"/></svg>
<svg class="a" style="left:87px;top:166px" width="20" height="20" viewBox="0 0 20 20"><circle cx="9.6" cy="9.6" r="7.6" fill="none" stroke="#ececec" stroke-width="1.9"/><path d="M9.2 5 V10.2 L12.8 13" fill="none" stroke="#ececec" stroke-width="1.6"/></svg>
<svg class="a" style="left:122px;top:164px" width="18" height="23" viewBox="0 0 18 23"><path d="M2.5 2 H11.5 L16 6.5 V20 Q16 21.3 14.7 21.3 H2.5 Q1.3 21.3 1.3 20 V3.3 Q1.3 2 2.5 2Z" fill="none" stroke="#ececec" stroke-width="1.9"/><path d="M11 2.3 V7 H15.7Z" fill="#ececec"/><path d="M9 8.5 Q9.5 13 13.5 15.5 Q9 14.5 4 17.8 Q7.5 14 9 8.5Z" fill="none" stroke="#ececec" stroke-width="1.1"/></svg>
<div class="t" style="left:539.80px;top:167.65px;font-size:14px;line-height:14px;color:#efefef;font-weight:400;letter-spacing:-0.1px;-webkit-text-stroke:0.25px currentColor">All results</div>
<div class="a" style="left:607.5px;top:169px;width:31px;height:13.5px;border-radius:7px;background:#696a6f"></div>
<div class="a" style="left:606.2px;top:167.2px;width:16.5px;height:16.5px;border-radius:50%;background:#e2e2e2;box-shadow:0 1px 2px rgba(0,0,0,.5)"></div>
<div class="t" style="left:647.80px;top:167.65px;font-size:14px;line-height:14px;color:#efefef;font-weight:400;letter-spacing:-0.17px;-webkit-text-stroke:0.25px currentColor">Visible results</div>
<div class="a" style="left:2px;top:191px;width:737px;height:1.5px;background:#1d2025"></div>
<div class="a" style="left:2px;top:192.50px;width:737px;height:61.05px;background:#262a31"></div>
<svg class="a" style="left:16.5px;top:218.00px" width="19" height="9" viewBox="0 0 19 9"><path d="M0.3 4.6 H18.2 L16.6 8.3 H1.4 Q0.3 8.3 0.3 7Z" fill="#fff"/><path d="M1.6 4.8 V1.2 H3 V0.2 H3.8 V1.8 L5.6 1.8 V4.8Z" fill="#fff"/><rect x="7.3" y="1.8" width="8.4" height="3" fill="#dcdcdc"/><rect x="7.3" y="2.9" width="8.4" height="0.5" fill="#444"/><rect x="9.9" y="1.8" width="0.5" height="3" fill="#555"/><rect x="12.6" y="1.8" width="0.5" height="3" fill="#555"/></svg>
<div class="a" style="left:45px;top:210.00px;width:1.2px;height:28px;background:#1e2126"></div>
<div class="t" style="left:82.60px;top:207.45px;font-size:14px;line-height:14px;color:#f3f3f3;font-weight:400;letter-spacing:-0.65px;-webkit-text-stroke:0.25px currentColor;word-spacing:1.3px">Enroute Report -- BOBBY JONES (366919160)</div>
<div class="t" style="left:82.60px;top:227.32px;font-size:12.5px;line-height:12.5px;color:#c9c9c9;font-weight:400;letter-spacing:0px;">02/03/2022</div>
<div class="t" style="left:640.80px;top:227.92px;font-size:12.5px;line-height:12.5px;color:#d0d0d0;font-weight:400;letter-spacing:-0.62px;">OHIO 508</div>
<svg class="a" style="left:699.5px;top:213.00px" width="20" height="20" viewBox="0 0 20 20"><circle cx="9.7" cy="9.8" r="8.1" fill="none" stroke="#fff" stroke-width="1.7"/><rect x="8.85" y="8.6" width="1.7" height="6" fill="#fff"/><circle cx="9.7" cy="6" r="1.1" fill="#fff"/></svg>
<div class="a" style="left:2px;top:253.25px;width:737px;height:61.05px;background:#24282f"></div>
<svg class="a" style="left:16.5px;top:278.75px" width="19" height="9" viewBox="0 0 19 9"><path d="M0.3 4.6 H18.2 L16.6 8.3 H1.4 Q0.3 8.3 0.3 7Z" fill="#fff"/><path d="M1.6 4.8 V1.2 H3 V0.2 H3.8 V1.8 L5.6 1.8 V4.8Z" fill="#fff"/><rect x="7.3" y="1.8" width="8.4" height="3" fill="#dcdcdc"/><rect x="7.3" y="2.9" width="8.4" height="0.5" fill="#444"/><rect x="9.9" y="1.8" width="0.5" height="3" fill="#555"/><rect x="12.6" y="1.8" width="0.5" height="3" fill="#555"/></svg>
<div class="a" style="left:45px;top:270.75px;width:1.2px;height:28px;background:#1e2126"></div>
<div class="t" style="left:82.60px;top:268.20px;font-size:14px;line-height:14px;color:#f3f3f3;font-weight:400;letter-spacing:-0.65px;-webkit-text-stroke:0.25px currentColor;word-spacing:1.3px">Enroute Report -- BOBBY JONES (366919160)</div>
<div class="t" style="left:82.60px;top:288.07px;font-size:12.5px;line-height:12.5px;color:#c9c9c9;font-weight:400;letter-spacing:0px;">02/02/2022</div>
<div class="t" style="left:640.80px;top:288.67px;font-size:12.5px;line-height:12.5px;color:#d0d0d0;font-weight:400;letter-spacing:-0.62px;">OHIO 482</div>
<svg class="a" style="left:699.5px;top:273.75px" width="20" height="20" viewBox="0 0 20 20"><circle cx="9.7" cy="9.8" r="8.1" fill="none" stroke="#fff" stroke-width="1.7"/><rect x="8.85" y="8.6" width="1.7" height="6" fill="#fff"/><circle cx="9.7" cy="6" r="1.1" fill="#fff"/></svg>
<div class="a" style="left:2px;top:314.00px;width:737px;height:61.05px;background:#651fff"></div>
<svg class="a" style="left:16.5px;top:339.50px" width="19" height="9" viewBox="0 0 19 9"><path d="M0.3 4.6 H18.2 L16.6 8.3 H1.4 Q0.3 8.3 0.3 7Z" fill="#fff"/><path d="M1.6 4.8 V1.2 H3 V0.2 H3.8 V1.8 L5.6 1.8 V4.8Z" fill="#fff"/><rect x="7.3" y="1.8" width="8.4" height="3" fill="#dcdcdc"/><rect x="7.3" y="2.9" width="8.4" height="0.5" fill="#444"/><rect x="9.9" y="1.8" width="0.5" height="3" fill="#555"/><rect x="12.6" y="1.8" width="0.5" height="3" fill="#555"/></svg>
<div class="a" style="left:45px;top:331.50px;width:1.2px;height:28px;background:#5a1ce0"></div>
<div class="t" style="left:82.60px;top:328.95px;font-size:14px;line-height:14px;color:#ffffff;font-weight:400;letter-spacing:-0.65px;-webkit-text-stroke:0.25px currentColor;word-spacing:1.3px">Departure Report -- BOBBY JONES (366919160) departed None</div>
<div class="t" style="left:82.60px;top:348.82px;font-size:12.5px;line-height:12.5px;color:#e8defc;font-weight:400;letter-spacing:0px;">02/02/2022</div>
<div class="t" style="left:640.80px;top:349.42px;font-size:12.5px;line-height:12.5px;color:#ece4ff;font-weight:400;letter-spacing:-0.62px;">OHIO 486</div>
<svg class="a" style="left:699.5px;top:334.50px" width="20" height="20" viewBox="0 0 20 20"><circle cx="9.7" cy="9.8" r="8.1" fill="none" stroke="#fff" stroke-width="1.7"/><rect x="8.85" y="8.6" width="1.7" height="6" fill="#fff"/><circle cx="9.7" cy="6" r="1.1" fill="#fff"/></svg>
<div class="a" style="left:2px;top:374.75px;width:737px;height:61.05px;background:#24282f"></div>
<svg class="a" style="left:16.5px;top:400.25px" width="19" height="9" viewBox="0 0 19 9"><path d="M0.3 4.6 H18.2 L16.6 8.3 H1.4 Q0.3 8.3 0.3 7Z" fill="#fff"/><path d="M1.6 4.8 V1.2 H3 V0.2 H3.8 V1.8 L5.6 1.8 V4.8Z" fill="#fff"/><rect x="7.3" y="1.8" width="8.4" height="3" fill="#dcdcdc"/><rect x="7.3" y="2.9" width="8.4" height="0.5" fill="#444"/><rect x="9.9" y="1.8" width="0.5" height="3" fill="#555"/><rect x="12.6" y="1.8" width="0.5" height="3" fill="#555"/></svg>
<div class="a" style="left:45px;top:392.25px;width:1.2px;height:28px;background:#1e2126"></div>
<div class="t" style="left:82.60px;top:389.70px;font-size:14px;line-height:14px;color:#f3f3f3;font-weight:400;letter-spacing:-0.65px;-webkit-text-stroke:0.25px currentColor;word-spacing:1.3px">Geofence Report -- BOBBY JONES (366919160) is in North Bend</div>
<div class="t" style="left:82.60px;top:409.57px;font-size:12.5px;line-height:12.5px;color:#c9c9c9;font-weight:400;letter-spacing:0px;">02/02/2022</div>
<div class="t" style="left:640.80px;top:410.17px;font-size:12.5px;line-height:12.5px;color:#d0d0d0;font-weight:400;letter-spacing:-0.62px;">OHIO 489</div>
<svg class="a" style="left:699.5px;top:395.25px" width="20" height="20" viewBox="0 0 20 20"><circle cx="9.7" cy="9.8" r="8.1" fill="none" stroke="#fff" stroke-width="1.7"/><rect x="8.85" y="8.6" width="1.7" height="6" fill="#fff"/><circle cx="9.7" cy="6" r="1.1" fill="#fff"/></svg>
<div class="a" style="left:2px;top:435.50px;width:737px;height:61.05px;background:#262a31"></div>
<svg class="a" style="left:16.5px;top:461.00px" width="19" height="9" viewBox="0 0 19 9"><path d="M0.3 4.6 H18.2 L16.6 8.3 H1.4 Q0.3 8.3 0.3 7Z" fill="#fff"/><path d="M1.6 4.8 V1.2 H3 V0.2 H3.8 V1.8 L5.6 1.8 V4.8Z" fill="#fff"/><rect x="7.3" y="1.8" width="8.4" height="3" fill="#dcdcdc"/><rect x="7.3" y="2.9" width="8.4" height="0.5" fill="#444"/><rect x="9.9" y="1.8" width="0.5" height="3" fill="#555"/><rect x="12.6" y="1.8" width="0.5" height="3" fill="#555"/></svg>
<div class="a" style="left:45px;top:453.00px;width:1.2px;height:28px;background:#1e2126"></div>
<div class="t" style="left:82.60px;top:450.45px;font-size:14px;line-height:14px;color:#f3f3f3;font-weight:400;letter-spacing:-0.65px;-webkit-text-stroke:0.25px currentColor;word-spacing:1.3px">Geofence Report -- BOBBY JONES (366919160) is in North Bend</div>
<div class="t" style="left:82.60px;top:470.32px;font-size:12.5px;line-height:12.5px;color:#c9c9c9;font-weight:400;letter-spacing:0px;">02/01/2022</div>
<div class="t" style="left:640.80px;top:470.92px;font-size:12.5px;line-height:12.5px;color:#d0d0d0;font-weight:400;letter-spacing:-0.62px;">OHIO 489</div>
<svg class="a" style="left:699.5px;top:456.00px" width="20" height="20" viewBox="0 0 20 20"><circle cx="9.7" cy="9.8" r="8.1" fill="none" stroke="#fff" stroke-width="1.7"/><rect x="8.85" y="8.6" width="1.7" height="6" fill="#fff"/><circle cx="9.7" cy="6" r="1.1" fill="#fff"/></svg>
<div class="a" style="left:2px;top:496.25px;width:737px;height:61.05px;background:#24282f"></div>
<svg class="a" style="left:16.5px;top:521.75px" width="19" height="9" viewBox="0 0 19 9"><path d="M0.3 4.6 H18.2 L16.6 8.3 H1.4 Q0.3 8.3 0.3 7Z" fill="#fff"/><path d="M1.6 4.8 V1.2 H3 V0.2 H3.8 V1.8 L5.6 1.8 V4.8Z" fill="#fff"/><rect x="7.3" y="1.8" width="8.4" height="3" fill="#dcdcdc"/><rect x="7.3" y="2.9" width="8.4" height="0.5" fill="#444"/><rect x="9.9" y="1.8" width="0.5" height="3" fill="#555"/><rect x="12.6" y="1.8" width="0.5" height="3" fill="#555"/></svg>
<div class="a" style="left:45px;top:513.75px;width:1.2px;height:28px;background:#1e2126"></div>
<div class="t" style="left:82.60px;top:511.20px;font-size:14px;line-height:14px;color:#f3f3f3;font-weight:400;letter-spacing:-0.65px;-webkit-text-stroke:0.25px currentColor;word-spacing:1.3px">Arrival Report -- BOBBY JONES (366919160) arrived in North Bend</div>
<div class="t" style="left:82.60px;top:531.07px;font-size:12.5px;line-height:12.5px;color:#c9c9c9;font-weight:400;letter-spacing:0px;">02/01/2022</div>
<div class="t" style="left:640.80px;top:531.67px;font-size:12.5px;line-height:12.5px;color:#d0d0d0;font-weight:400;letter-spacing:-0.62px;">OHIO 489</div>
<svg class="a" style="left:699.5px;top:516.75px" width="20" height="20" viewBox="0 0 20 20"><circle cx="9.7" cy="9.8" r="8.1" fill="none" stroke="#fff" stroke-width="1.7"/><rect x="8.85" y="8.6" width="1.7" height="6" fill="#fff"/><circle cx="9.7" cy="6" r="1.1" fill="#fff"/></svg>
<div class="a" style="left:2px;top:557.00px;width:737px;height:61.05px;background:#262a31"></div>
<svg class="a" style="left:16.5px;top:582.50px" width="19" height="9" viewBox="0 0 19 9"><path d="M0.3 4.6 H18.2 L16.6 8.3 H1.4 Q0.3 8.3 0.3 7Z" fill="#fff"/><path d="M1.6 4.8 V1.2 H3 V0.2 H3.8 V1.8 L5.6 1.8 V4.8Z" fill="#fff"/><rect x="7.3" y="1.8" width="8.4" height="3" fill="#dcdcdc"/><rect x="7.3" y="2.9" width="8.4" height="0.5" fill="#444"/><rect x="9.9" y="1.8" width="0.5" height="3" fill="#555"/><rect x="12.6" y="1.8" width="0.5" height="3" fill="#555"/></svg>
<div class="a" style="left:45px;top:574.50px;width:1.2px;height:28px;background:#1e2126"></div>
<div class="t" style="left:82.60px;top:571.95px;font-size:14px;line-height:14px;color:#f3f3f3;font-weight:400;letter-spacing:-0.65px;-webkit-text-stroke:0.25px currentColor;word-spacing:1.3px">Enroute Report -- BOBBY JONES (366919160)</div>
<div class="t" style="left:82.60px;top:591.82px;font-size:12.5px;line-height:12.5px;color:#c9c9c9;font-weight:400;letter-spacing:0px;">02/01/2022</div>
<div class="t" style="left:640.80px;top:592.42px;font-size:12.5px;line-height:12.5px;color:#d0d0d0;font-weight:400;letter-spacing:-0.62px;">OHIO 486</div>
<svg class="a" style="left:699.5px;top:577.50px" width="20" height="20" viewBox="0 0 20 20"><circle cx="9.7" cy="9.8" r="8.1" fill="none" stroke="#fff" stroke-width="1.7"/><rect x="8.85" y="8.6" width="1.7" height="6" fill="#fff"/><circle cx="9.7" cy="6" r="1.1" fill="#fff"/></svg>
<div class="a" style="left:2px;top:617.75px;width:737px;height:61.05px;background:#24282f"></div>
<svg class="a" style="left:16.5px;top:643.25px" width="19" height="9" viewBox="0 0 19 9"><path d="M0.3 4.6 H18.2 L16.6 8.3 H1.4 Q0.3 8.3 0.3 7Z" fill="#fff"/><path d="M1.6 4.8 V1.2 H3 V0.2 H3.8 V1.8 L5.6 1.8 V4.8Z" fill="#fff"/><rect x="7.3" y="1.8" width="8.4" height="3" fill="#dcdcdc"/><rect x="7.3" y="2.9" width="8.4" height="0.5" fill="#444"/><rect x="9.9" y="1.8" width="0.5" height="3" fill="#555"/><rect x="12.6" y="1.8" width="0.5" height="3" fill="#555"/></svg>
<div class="a" style="left:45px;top:635.25px;width:1.2px;height:28px;background:#1e2126"></div>
<div class="t" style="left:82.60px;top:632.70px;font-size:14px;line-height:14px;color:#f3f3f3;font-weight:400;letter-spacing:-0.65px;-webkit-text-stroke:0.25px currentColor;word-spacing:1.3px">Departure Report -- BOBBY JONES (366919160) departed None</div>
<div class="t" style="left:82.60px;top:652.57px;font-size:12.5px;line-height:12.5px;color:#c9c9c9;font-weight:400;letter-spacing:0px;">02/01/2022</div>
<div class="t" style="left:640.80px;top:653.17px;font-size:12.5px;line-height:12.5px;color:#d0d0d0;font-weight:400;letter-spacing:-0.62px;">OHIO 485</div>
<svg class="a" style="left:699.5px;top:638.25px" width="20" height="20" viewBox="0 0 20 20"><circle cx="9.7" cy="9.8" r="8.1" fill="none" stroke="#fff" stroke-width="1.7"/><rect x="8.85" y="8.6" width="1.7" height="6" fill="#fff"/><circle cx="9.7" cy="6" r="1.1" fill="#fff"/></svg>
<div class="a" style="left:2px;top:678.50px;width:737px;height:61.05px;background:#262a31"></div>
<svg class="a" style="left:16.5px;top:704.00px" width="19" height="9" viewBox="0 0 19 9"><path d="M0.3 4.6 H18.2 L16.6 8.3 H1.4 Q0.3 8.3 0.3 7Z" fill="#fff"/><path d="M1.6 4.8 V1.2 H3 V0.2 H3.8 V1.8 L5.6 1.8 V4.8Z" fill="#fff"/><rect x="7.3" y="1.8" width="8.4" height="3" fill="#dcdcdc"/><rect x="7.3" y="2.9" width="8.4" height="0.5" fill="#444"/><rect x="9.9" y="1.8" width="0.5" height="3" fill="#555"/><rect x="12.6" y="1.8" width="0.5" height="3" fill="#555"/></svg>
<div class="a" style="left:45px;top:696.00px;width:1.2px;height:28px;background:#1e2126"></div>
<div class="t" style="left:82.60px;top:693.45px;font-size:14px;line-height:14px;color:#f3f3f3;font-weight:400;letter-spacing:-0.65px;-webkit-text-stroke:0.25px currentColor;word-spacing:1.3px">Geofence Report -- BOBBY JONES (366919160) is in North Bend</div>
<div class="t" style="left:82.60px;top:713.32px;font-size:12.5px;line-height:12.5px;color:#c9c9c9;font-weight:400;letter-spacing:0px;">01/31/2022</div>
<div class="t" style="left:640.80px;top:713.92px;font-size:12.5px;line-height:12.5px;color:#d0d0d0;font-weight:400;letter-spacing:-0.62px;">OHIO 489</div>
<svg class="a" style="left:699.5px;top:699.00px" width="20" height="20" viewBox="0 0 20 20"><circle cx="9.7" cy="9.8" r="8.1" fill="none" stroke="#fff" stroke-width="1.7"/><rect x="8.85" y="8.6" width="1.7" height="6" fill="#fff"/><circle cx="9.7" cy="6" r="1.1" fill="#fff"/></svg>
</div>
</body></html>
